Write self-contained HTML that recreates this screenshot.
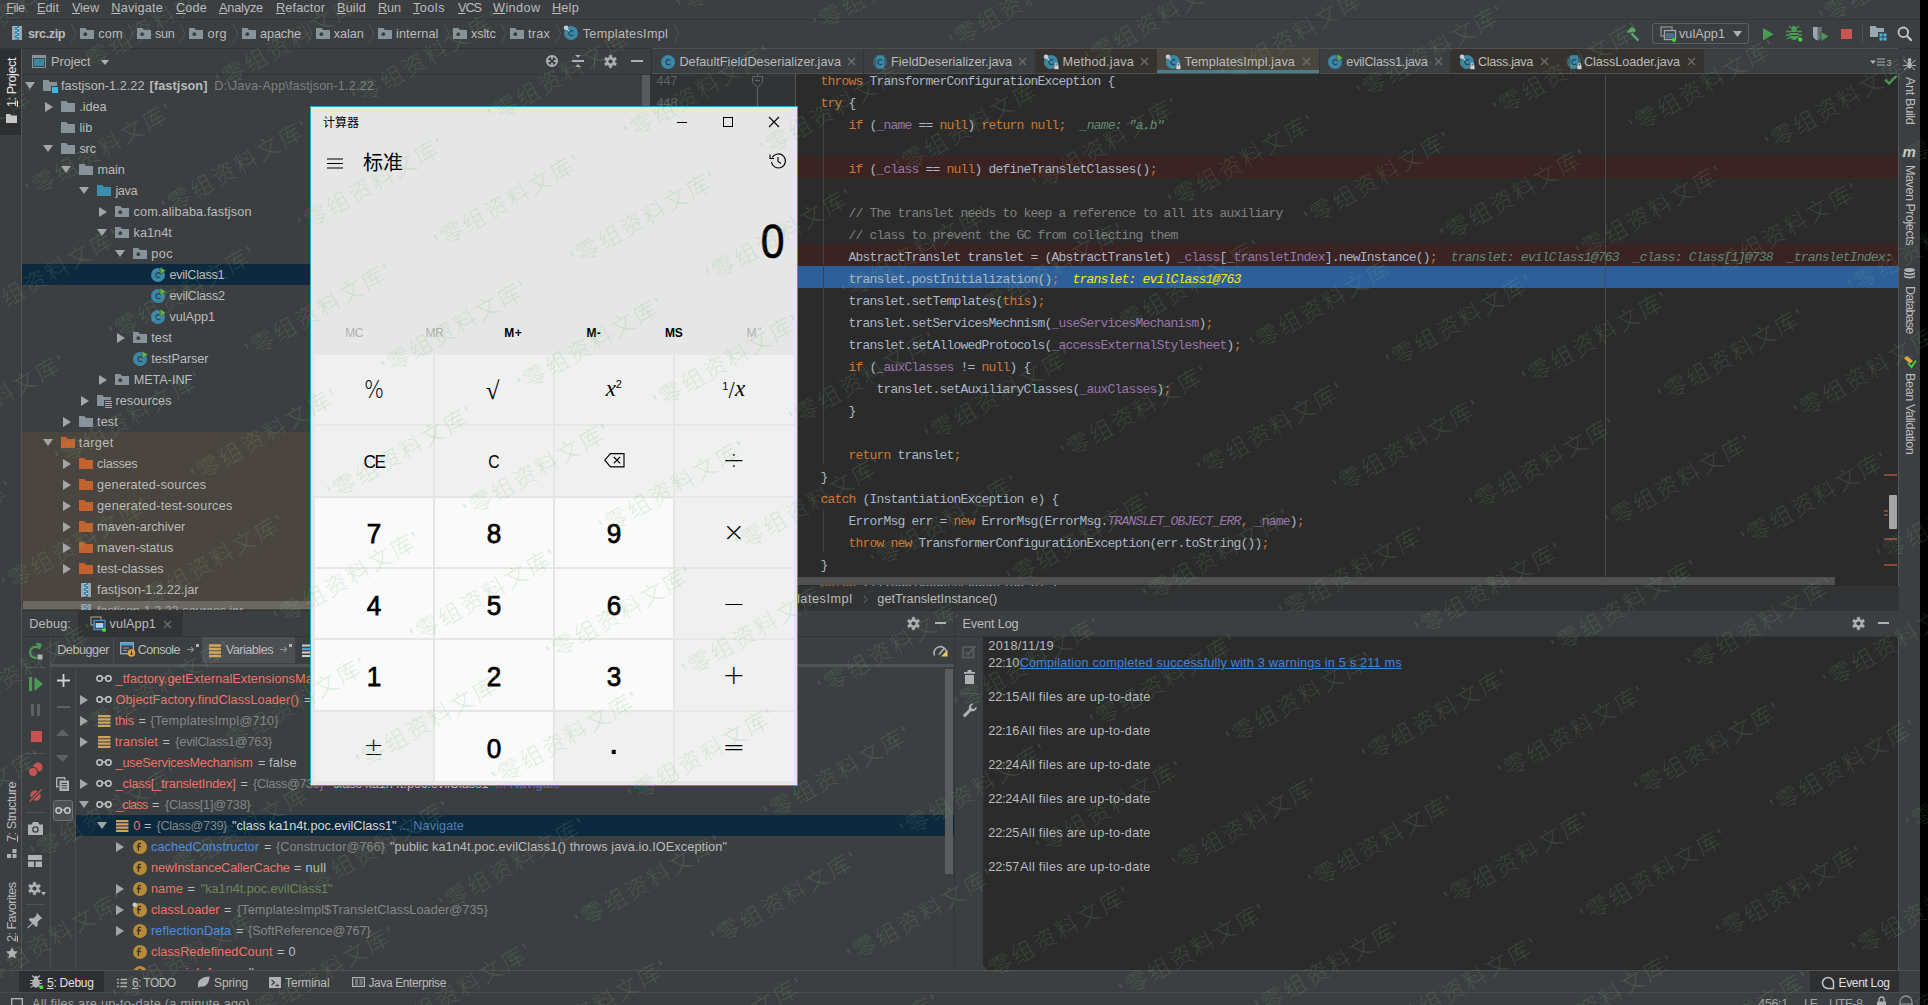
<!DOCTYPE html>
<html lang="en"><head><meta charset="utf-8"><title>TemplatesImpl.java - fastjson</title>
<style>
html,body{margin:0;padding:0;}
body{width:1928px;height:1005px;overflow:hidden;position:relative;background:#3c3f41;font-family:"Liberation Sans","Noto Sans CJK SC",sans-serif;}
#r{position:absolute;left:0;top:0;width:1928px;height:1005px;overflow:hidden;}
#r div,#r svg,#r span.t,#r pre{position:absolute;}
span.t{white-space:pre;font-family:"Liberation Sans","Noto Sans CJK SC",sans-serif;}
span.t span{position:static;}
svg{overflow:visible;display:block;}
pre.cl{margin:0;font-family:"Liberation Mono","Noto Sans CJK SC",monospace;font-size:13px;letter-spacing:-0.8px;line-height:22px;height:22px;white-space:pre;color:#a9b7c6;}
u{text-decoration:underline;text-underline-offset:1px;}
#r span.wm{position:absolute;white-space:nowrap;font-family:"Liberation Sans","Noto Sans CJK SC",sans-serif;font-weight:300;font-size:23px;letter-spacing:2.4px;line-height:30px;color:rgba(150,215,150,.17);transform:translate(-50%,-50%) rotate(-30deg);}
#r span.w2{color:rgba(90,190,90,.13);}
</style></head>
<body><div id="r">
<div style="left:0px;top:0px;width:1928px;height:20px;background:#3c3f41;"></div>
<div style="left:0px;top:19px;width:1928px;height:1px;background:#323537;"></div>
<span class="t" style="letter-spacing:-0.517px;left:6.2px;top:-2.5px;line-height:20px;font-size:12.7px;color:#bbb;"><u>F</u>ile</span>
<span class="t" style="letter-spacing:0.031px;left:37px;top:-2.5px;line-height:20px;font-size:12.7px;color:#bbb;"><u>E</u>dit</span>
<span class="t" style="letter-spacing:-0.045px;left:71.9px;top:-2.5px;line-height:20px;font-size:12.7px;color:#bbb;"><u>V</u>iew</span>
<span class="t" style="letter-spacing:0.201px;left:111.3px;top:-2.5px;line-height:20px;font-size:12.7px;color:#bbb;"><u>N</u>avigate</span>
<span class="t" style="letter-spacing:0.164px;left:176px;top:-2.5px;line-height:20px;font-size:12.7px;color:#bbb;"><u>C</u>ode</span>
<span class="t" style="letter-spacing:-0.165px;left:219px;top:-2.5px;line-height:20px;font-size:12.7px;color:#bbb;"><u>A</u>nalyze</span>
<span class="t" style="letter-spacing:0.129px;left:276px;top:-2.5px;line-height:20px;font-size:12.7px;color:#bbb;"><u>R</u>efactor</span>
<span class="t" style="letter-spacing:0.156px;left:337px;top:-2.5px;line-height:20px;font-size:12.7px;color:#bbb;"><u>B</u>uild</span>
<span class="t" style="letter-spacing:-0.099px;left:378px;top:-2.5px;line-height:20px;font-size:12.7px;color:#bbb;"><u>R</u>un</span>
<span class="t" style="letter-spacing:0.495px;left:412.9px;top:-2.5px;line-height:20px;font-size:12.7px;color:#bbb;"><u>T</u>ools</span>
<span class="t" style="letter-spacing:-1.031px;left:458px;top:-2.5px;line-height:20px;font-size:12.7px;color:#bbb;"><u>V</u>CS</span>
<span class="t" style="letter-spacing:0.393px;left:493px;top:-2.5px;line-height:20px;font-size:12.7px;color:#bbb;"><u>W</u>indow</span>
<span class="t" style="letter-spacing:0.248px;left:551.9px;top:-2.5px;line-height:20px;font-size:12.7px;color:#bbb;"><u>H</u>elp</span>
<div style="left:0px;top:20px;width:1928px;height:28px;background:#3c3f41;"></div>
<div style="left:0px;top:48px;width:1928px;height:1px;background:#323537;"></div>
<svg style="left:12px;top:26px;" width="10" height="14" viewBox="0 0 10 14"><rect x="0" y="0" width="3" height="14" fill="#9aa7b0"/><rect x="7" y="0" width="3" height="14" fill="#9aa7b0"/><rect x="3" y="0" width="4" height="14" fill="#3a86a8"/><rect x="3" y="0" width="2" height="1" fill="#9fd6ee"/><rect x="5" y="2" width="2" height="1" fill="#9fd6ee"/><rect x="3" y="4" width="2" height="1" fill="#9fd6ee"/><rect x="5" y="6" width="2" height="1" fill="#9fd6ee"/><rect x="3" y="8" width="2" height="1" fill="#9fd6ee"/><rect x="5" y="10" width="2" height="1" fill="#9fd6ee"/><rect x="3" y="12" width="2" height="1" fill="#9fd6ee"/></svg>
<span class="t" style="letter-spacing:-0.458px;left:28px;top:23.5px;line-height:20px;font-size:12.7px;color:#bbb;font-weight:bold;">src.zip</span>
<svg style="left:69.5px;top:24px;" width="7" height="19" viewBox="0 0 7 19"><path d="M1 0L6 9.5L1 19" fill="none" stroke="#515456" stroke-width="1"/></svg>
<svg style="left:80px;top:28px;" width="14" height="11" viewBox="0 0 14 11"><path d="M0 0h5.2l1.8 2h7v9h-14z" fill="#87939a"/><circle cx="5.3" cy="6.2" r="1.9" fill="#3c3f41"/></svg>
<span class="t" style="letter-spacing:0.110px;left:98.3px;top:23.5px;line-height:20px;font-size:12.7px;color:#bbb;">com</span>
<svg style="left:127.1px;top:24px;" width="7" height="19" viewBox="0 0 7 19"><path d="M1 0L6 9.5L1 19" fill="none" stroke="#515456" stroke-width="1"/></svg>
<svg style="left:137px;top:28px;" width="14" height="11" viewBox="0 0 14 11"><path d="M0 0h5.2l1.8 2h7v9h-14z" fill="#87939a"/><circle cx="5.3" cy="6.2" r="1.9" fill="#3c3f41"/></svg>
<span class="t" style="letter-spacing:-0.290px;left:155px;top:23.5px;line-height:20px;font-size:12.7px;color:#bbb;">sun</span>
<svg style="left:179.1px;top:24px;" width="7" height="19" viewBox="0 0 7 19"><path d="M1 0L6 9.5L1 19" fill="none" stroke="#515456" stroke-width="1"/></svg>
<svg style="left:189px;top:28px;" width="14" height="11" viewBox="0 0 14 11"><path d="M0 0h5.2l1.8 2h7v9h-14z" fill="#87939a"/><circle cx="5.3" cy="6.2" r="1.9" fill="#3c3f41"/></svg>
<span class="t" style="letter-spacing:0.385px;left:207.5px;top:23.5px;line-height:20px;font-size:12.7px;color:#bbb;">org</span>
<svg style="left:231.5px;top:24px;" width="7" height="19" viewBox="0 0 7 19"><path d="M1 0L6 9.5L1 19" fill="none" stroke="#515456" stroke-width="1"/></svg>
<svg style="left:242px;top:28px;" width="14" height="11" viewBox="0 0 14 11"><path d="M0 0h5.2l1.8 2h7v9h-14z" fill="#87939a"/><circle cx="5.3" cy="6.2" r="1.9" fill="#3c3f41"/></svg>
<span class="t" style="letter-spacing:-0.104px;left:260px;top:23.5px;line-height:20px;font-size:12.7px;color:#bbb;">apache</span>
<svg style="left:305.5px;top:24px;" width="7" height="19" viewBox="0 0 7 19"><path d="M1 0L6 9.5L1 19" fill="none" stroke="#515456" stroke-width="1"/></svg>
<svg style="left:315.6px;top:28px;" width="14" height="11" viewBox="0 0 14 11"><path d="M0 0h5.2l1.8 2h7v9h-14z" fill="#87939a"/><circle cx="5.3" cy="6.2" r="1.9" fill="#3c3f41"/></svg>
<span class="t" style="letter-spacing:-0.109px;left:333.8px;top:23.5px;line-height:20px;font-size:12.7px;color:#bbb;">xalan</span>
<svg style="left:368.1px;top:24px;" width="7" height="19" viewBox="0 0 7 19"><path d="M1 0L6 9.5L1 19" fill="none" stroke="#515456" stroke-width="1"/></svg>
<svg style="left:378px;top:28px;" width="14" height="11" viewBox="0 0 14 11"><path d="M0 0h5.2l1.8 2h7v9h-14z" fill="#87939a"/><circle cx="5.3" cy="6.2" r="1.9" fill="#3c3f41"/></svg>
<span class="t" style="letter-spacing:0.109px;left:396px;top:23.5px;line-height:20px;font-size:12.7px;color:#bbb;">internal</span>
<svg style="left:443.0px;top:24px;" width="7" height="19" viewBox="0 0 7 19"><path d="M1 0L6 9.5L1 19" fill="none" stroke="#515456" stroke-width="1"/></svg>
<svg style="left:453px;top:28px;" width="14" height="11" viewBox="0 0 14 11"><path d="M0 0h5.2l1.8 2h7v9h-14z" fill="#87939a"/><circle cx="5.3" cy="6.2" r="1.9" fill="#3c3f41"/></svg>
<span class="t" style="letter-spacing:-0.135px;left:471px;top:23.5px;line-height:20px;font-size:12.7px;color:#bbb;">xsltc</span>
<svg style="left:500.2px;top:24px;" width="7" height="19" viewBox="0 0 7 19"><path d="M1 0L6 9.5L1 19" fill="none" stroke="#515456" stroke-width="1"/></svg>
<svg style="left:510px;top:28px;" width="14" height="11" viewBox="0 0 14 11"><path d="M0 0h5.2l1.8 2h7v9h-14z" fill="#87939a"/><circle cx="5.3" cy="6.2" r="1.9" fill="#3c3f41"/></svg>
<span class="t" style="letter-spacing:0.211px;left:528px;top:23.5px;line-height:20px;font-size:12.7px;color:#bbb;">trax</span>
<svg style="left:554.5px;top:24px;" width="7" height="19" viewBox="0 0 7 19"><path d="M1 0L6 9.5L1 19" fill="none" stroke="#515456" stroke-width="1"/></svg>
<svg style="left:562.5px;top:24px;" width="17" height="18" viewBox="-1 -2 17 18"><circle cx="7" cy="7" r="7" fill="#3c87a5"/><path d="M9.2 8.8A2.5 2.5 0 1 1 9.2 5.3" fill="none" stroke="#1f4556" stroke-width="1.2"/><circle cx="2" cy="1.800" r="2.300" fill="#c4cdd3"/><path d="M3.300 3.200l2 2.100" stroke="#c4cdd3" stroke-width="1.200"/></svg>
<span class="t" style="letter-spacing:0.285px;left:582.7px;top:23.5px;line-height:20px;font-size:12.7px;color:#bbb;">TemplatesImpl</span>
<svg style="left:672.5px;top:24px;" width="7" height="19" viewBox="0 0 7 19"><path d="M1 0L6 9.5L1 19" fill="none" stroke="#515456" stroke-width="1"/></svg>
<div style="left:0px;top:49px;width:21px;height:921px;background:#3c3f41;"></div>
<div style="left:21px;top:49px;width:1px;height:921px;background:#555555;"></div>
<div style="left:0px;top:49px;width:21px;height:86px;background:#2d2f30;"></div>
<span class="t" style="letter-spacing:-0.461px;left:12px;top:96.5px;line-height:20px;font-size:12.7px;color:#e8e8e8;transform-origin:0 50%;transform:rotate(-90deg);"><u>1</u>: Project</span>
<svg style="left:6px;top:113.5px;" width="11" height="9" viewBox="0 0 11 9"><path d="M0 0h4l1.5 1.6h5.5v7.4h-11z" fill="#c8c8c8"/></svg>
<span class="t" style="letter-spacing:-0.466px;left:12px;top:832.0px;line-height:20px;font-size:12.7px;color:#bbb;transform-origin:0 50%;transform:rotate(-90deg);"><u>7</u>: Structure</span>
<svg style="left:6.5px;top:849px;" width="10" height="9" viewBox="0 0 10 9"><rect x="0" y="5" width="4" height="4" fill="#afb1b3"/><rect x="5.5" y="5" width="4" height="4" fill="#afb1b3"/><rect x="5.5" y="0" width="4" height="4" fill="#afb1b3"/></svg>
<span class="t" style="letter-spacing:-0.566px;left:12px;top:932.0px;line-height:20px;font-size:12.7px;color:#bbb;transform-origin:0 50%;transform:rotate(-90deg);"><u>2</u>: Favorites</span>
<svg style="left:5.5px;top:947px;" width="12" height="12" viewBox="0 0 12 12"><path d="M6 0l1.8 4.1 4.2.4-3.2 2.9 1 4.3L6 9.4 2.2 11.7l1-4.3L0 4.5l4.2-.4z" fill="#afb1b3"/></svg>
<div style="left:22px;top:49px;width:629px;height:25px;background:#3c3f41;"></div>
<div style="left:22px;top:74px;width:629px;height:1px;background:#323537;"></div>
<svg style="left:32px;top:55px;" width="14" height="13" viewBox="0 0 14 13"><rect width="14" height="13" fill="#87939a"/><rect x="1" y="3" width="12" height="9" fill="#3c3f41"/><rect x="1.800" y="3.900" width="10.400" height="7.200" fill="#3e86a0"/></svg>
<span class="t" style="letter-spacing:0.000px;left:51px;top:51.5px;line-height:20px;font-size:12.7px;color:#bbb;">Project</span>
<svg style="left:101px;top:59.5px;" width="8" height="5" viewBox="0 0 8 5"><path d="M0 0h8L4 5z" fill="#afb1b3"/></svg>
<svg style="left:546px;top:55px;" width="12" height="12" viewBox="0 0 12 12"><circle cx="6" cy="6" r="5" fill="none" stroke="#afb1b3" stroke-width="2"/><path d="M6 1v3.200M6 7.800V11M1 6h3.200M7.800 6H11" stroke="#afb1b3" stroke-width="1.800"/></svg>
<svg style="left:572px;top:55px;" width="12" height="12" viewBox="0 0 12 12"><path d="M0 6h12" stroke="#afb1b3" stroke-width="2"/><path d="M3 0h6L6 2.800zM3 12h6L6 9.200z" fill="#afb1b3"/></svg>
<div style="left:594px;top:53px;width:1px;height:17px;background:#515456;"></div>
<svg style="left:604.1px;top:54.5px;" width="13" height="13" viewBox="0 0 13 13"><g transform="translate(6.5 6.5)"><polygon points="-1.40,-4.07 -1.22,-6.28 1.22,-6.28 1.40,-4.07 2.82,-3.25 4.83,-4.20 6.05,-2.08 4.22,-0.82 4.22,0.82 6.05,2.08 4.83,4.20 2.82,3.25 1.40,4.07 1.22,6.28 -1.22,6.28 -1.40,4.07 -2.82,3.25 -4.83,4.20 -6.05,2.08 -4.22,0.82 -4.22,-0.82 -6.05,-2.08 -4.83,-4.20 -2.82,-3.25" fill="#afb1b3" stroke="#afb1b3" stroke-width=".5" stroke-linejoin="round"/><circle r="2.1" fill="#3c3f41"/></g></svg>
<div style="left:630.7px;top:60px;width:12px;height:2px;background:#afb1b3;"></div>
<div style="left:22px;top:432px;width:629px;height:180px;background:#4a463f;"></div>
<div style="left:22px;top:264px;width:629px;height:21px;background:#0d293e;"></div>
<svg style="left:25px;top:82.0px;" width="10" height="7" viewBox="0 0 10 7"><path d="M0 0h10L5 7z" fill="#a3a5a6"/></svg>
<svg style="left:43px;top:80px;" width="14" height="11" viewBox="0 0 14 11"><path d="M0 0h5.2l1.8 2h7v9h-14z" fill="#87939a"/></svg>
<svg style="left:51px;top:86px;" width="7" height="7" viewBox="0 0 7 7"><rect width="7" height="7" fill="#3c3f41"/><rect x="1" y="1" width="6" height="6" fill="#40b6e0"/></svg>
<span class="t" style="letter-spacing:0.024px;left:60.9px;top:76.0px;line-height:20px;font-size:12.7px;color:#bbb;">fastjson-1.2.22</span>
<svg style="left:45px;top:101.5px;" width="8" height="10" viewBox="0 0 8 10"><path d="M0 0L8 5L0 10z" fill="#a3a5a6"/></svg>
<svg style="left:61px;top:101px;" width="14" height="11" viewBox="0 0 14 11"><path d="M0 0h5.2l1.8 2h7v9h-14z" fill="#87939a"/></svg>
<span class="t" style="letter-spacing:-0.083px;left:79.4px;top:97.0px;line-height:20px;font-size:12.7px;color:#bbb;">.idea</span>
<svg style="left:61px;top:122px;" width="14" height="11" viewBox="0 0 14 11"><path d="M0 0h5.2l1.8 2h7v9h-14z" fill="#87939a"/></svg>
<span class="t" style="letter-spacing:0.099px;left:79.4px;top:118.0px;line-height:20px;font-size:12.7px;color:#bbb;">lib</span>
<svg style="left:43px;top:145.0px;" width="10" height="7" viewBox="0 0 10 7"><path d="M0 0h10L5 7z" fill="#a3a5a6"/></svg>
<svg style="left:61px;top:143px;" width="14" height="11" viewBox="0 0 14 11"><path d="M0 0h5.2l1.8 2h7v9h-14z" fill="#87939a"/></svg>
<span class="t" style="letter-spacing:-0.141px;left:79.4px;top:139.0px;line-height:20px;font-size:12.7px;color:#bbb;">src</span>
<svg style="left:61px;top:166.0px;" width="10" height="7" viewBox="0 0 10 7"><path d="M0 0h10L5 7z" fill="#a3a5a6"/></svg>
<svg style="left:79px;top:164px;" width="14" height="11" viewBox="0 0 14 11"><path d="M0 0h5.2l1.8 2h7v9h-14z" fill="#87939a"/></svg>
<span class="t" style="letter-spacing:-0.125px;left:97.6px;top:160.0px;line-height:20px;font-size:12.7px;color:#bbb;">main</span>
<svg style="left:79px;top:187.0px;" width="10" height="7" viewBox="0 0 10 7"><path d="M0 0h10L5 7z" fill="#a3a5a6"/></svg>
<svg style="left:97px;top:185px;" width="14" height="11" viewBox="0 0 14 11"><path d="M0 0h5.2l1.8 2h7v9h-14z" fill="#3a8fb0"/></svg>
<span class="t" style="letter-spacing:-0.345px;left:115.4px;top:181.0px;line-height:20px;font-size:12.7px;color:#bbb;">java</span>
<svg style="left:99px;top:206.5px;" width="8" height="10" viewBox="0 0 8 10"><path d="M0 0L8 5L0 10z" fill="#a3a5a6"/></svg>
<svg style="left:115px;top:206px;" width="14" height="11" viewBox="0 0 14 11"><path d="M0 0h5.2l1.8 2h7v9h-14z" fill="#87939a"/><circle cx="5.3" cy="6.2" r="1.9" fill="#3c3f41"/></svg>
<span class="t" style="letter-spacing:0.121px;left:133.5px;top:202.0px;line-height:20px;font-size:12.7px;color:#bbb;">com.alibaba.fastjson</span>
<svg style="left:97px;top:229.0px;" width="10" height="7" viewBox="0 0 10 7"><path d="M0 0h10L5 7z" fill="#a3a5a6"/></svg>
<svg style="left:115px;top:227px;" width="14" height="11" viewBox="0 0 14 11"><path d="M0 0h5.2l1.8 2h7v9h-14z" fill="#87939a"/><circle cx="5.3" cy="6.2" r="1.9" fill="#3c3f41"/></svg>
<span class="t" style="letter-spacing:0.051px;left:133.5px;top:223.0px;line-height:20px;font-size:12.7px;color:#bbb;">ka1n4t</span>
<svg style="left:115px;top:250.0px;" width="10" height="7" viewBox="0 0 10 7"><path d="M0 0h10L5 7z" fill="#a3a5a6"/></svg>
<svg style="left:133px;top:248px;" width="14" height="11" viewBox="0 0 14 11"><path d="M0 0h5.2l1.8 2h7v9h-14z" fill="#87939a"/><circle cx="5.3" cy="6.2" r="1.9" fill="#3c3f41"/></svg>
<span class="t" style="letter-spacing:0.377px;left:151.3px;top:244.0px;line-height:20px;font-size:12.7px;color:#bbb;">poc</span>
<svg style="left:150px;top:266px;" width="17" height="18" viewBox="-1 -2 17 18"><circle cx="7" cy="7" r="7" fill="#3c87a5"/><path d="M9.2 8.8A2.5 2.5 0 1 1 9.2 5.3" fill="none" stroke="#1f4556" stroke-width="1.2"/><path d="M9.2 -1L15 2.7L9.2 6.4z" fill="#62b543" stroke="#0d293e" stroke-width=".5"/></svg>
<span class="t" style="letter-spacing:-0.313px;left:169.5px;top:265.0px;line-height:20px;font-size:12.7px;color:#bbb;">evilClass1</span>
<svg style="left:150px;top:287px;" width="17" height="18" viewBox="-1 -2 17 18"><circle cx="7" cy="7" r="7" fill="#3c87a5"/><path d="M9.2 8.8A2.5 2.5 0 1 1 9.2 5.3" fill="none" stroke="#1f4556" stroke-width="1.2"/><path d="M9.2 -1L15 2.7L9.2 6.4z" fill="#62b543" stroke="#3c3f41" stroke-width=".5"/></svg>
<span class="t" style="letter-spacing:-0.243px;left:169.5px;top:286.0px;line-height:20px;font-size:12.7px;color:#bbb;">evilClass2</span>
<svg style="left:150px;top:308px;" width="17" height="18" viewBox="-1 -2 17 18"><circle cx="7" cy="7" r="7" fill="#3c87a5"/><path d="M9.2 8.8A2.5 2.5 0 1 1 9.2 5.3" fill="none" stroke="#1f4556" stroke-width="1.2"/><path d="M9.2 -1L15 2.7L9.2 6.4z" fill="#62b543" stroke="#3c3f41" stroke-width=".5"/></svg>
<span class="t" style="letter-spacing:-0.051px;left:169.5px;top:307.0px;line-height:20px;font-size:12.7px;color:#bbb;">vulApp1</span>
<svg style="left:117px;top:332.5px;" width="8" height="10" viewBox="0 0 8 10"><path d="M0 0L8 5L0 10z" fill="#a3a5a6"/></svg>
<svg style="left:133px;top:332px;" width="14" height="11" viewBox="0 0 14 11"><path d="M0 0h5.2l1.8 2h7v9h-14z" fill="#87939a"/><circle cx="5.3" cy="6.2" r="1.9" fill="#3c3f41"/></svg>
<span class="t" style="letter-spacing:0.037px;left:151.3px;top:328.0px;line-height:20px;font-size:12.7px;color:#bbb;">test</span>
<svg style="left:132px;top:350px;" width="17" height="18" viewBox="-1 -2 17 18"><circle cx="7" cy="7" r="7" fill="#3c87a5"/><path d="M9.2 8.8A2.5 2.5 0 1 1 9.2 5.3" fill="none" stroke="#1f4556" stroke-width="1.2"/><path d="M9.2 -1L15 2.7L9.2 6.4z" fill="#62b543" stroke="#3c3f41" stroke-width=".5"/></svg>
<span class="t" style="letter-spacing:-0.063px;left:151.3px;top:349.0px;line-height:20px;font-size:12.7px;color:#bbb;">testParser</span>
<svg style="left:99px;top:374.5px;" width="8" height="10" viewBox="0 0 8 10"><path d="M0 0L8 5L0 10z" fill="#a3a5a6"/></svg>
<svg style="left:115px;top:374px;" width="14" height="11" viewBox="0 0 14 11"><path d="M0 0h5.2l1.8 2h7v9h-14z" fill="#87939a"/><circle cx="5.3" cy="6.2" r="1.9" fill="#3c3f41"/></svg>
<span class="t" style="letter-spacing:-0.059px;left:133.7px;top:370.0px;line-height:20px;font-size:12.7px;color:#bbb;">META-INF</span>
<svg style="left:81px;top:395.5px;" width="8" height="10" viewBox="0 0 8 10"><path d="M0 0L8 5L0 10z" fill="#a3a5a6"/></svg>
<svg style="left:97px;top:395px;" width="14" height="11" viewBox="0 0 14 11"><path d="M0 0h5.2l1.8 2h7v9h-14z" fill="#87939a"/></svg>
<svg style="left:104px;top:400px;" width="8" height="8" viewBox="0 0 8 8"><rect width="8" height="8" fill="#3c3f41"/><path d="M1 1.5h7M1 3.5h7M1 5.5h7M1 7.5h7" stroke="#d9a343" stroke-width="1"/></svg>
<span class="t" style="letter-spacing:0.053px;left:115.4px;top:391.0px;line-height:20px;font-size:12.7px;color:#bbb;">resources</span>
<svg style="left:63px;top:416.5px;" width="8" height="10" viewBox="0 0 8 10"><path d="M0 0L8 5L0 10z" fill="#a3a5a6"/></svg>
<svg style="left:79px;top:416px;" width="14" height="11" viewBox="0 0 14 11"><path d="M0 0h5.2l1.8 2h7v9h-14z" fill="#87939a"/></svg>
<span class="t" style="letter-spacing:0.062px;left:97.1px;top:412.0px;line-height:20px;font-size:12.7px;color:#bbb;">test</span>
<svg style="left:43px;top:439.0px;" width="10" height="7" viewBox="0 0 10 7"><path d="M0 0h10L5 7z" fill="#a3a5a6"/></svg>
<svg style="left:61px;top:437px;" width="14" height="11" viewBox="0 0 14 11"><path d="M0 0h5.2l1.8 2h7v9h-14z" fill="#c2632f"/></svg>
<span class="t" style="letter-spacing:0.408px;left:78.8px;top:433.0px;line-height:20px;font-size:12.7px;color:#bbb;">target</span>
<svg style="left:63px;top:458.5px;" width="8" height="10" viewBox="0 0 8 10"><path d="M0 0L8 5L0 10z" fill="#a3a5a6"/></svg>
<svg style="left:79px;top:458px;" width="14" height="11" viewBox="0 0 14 11"><path d="M0 0h5.2l1.8 2h7v9h-14z" fill="#c2632f"/></svg>
<span class="t" style="letter-spacing:-0.287px;left:97.1px;top:454.0px;line-height:20px;font-size:12.7px;color:#bbb;">classes</span>
<svg style="left:63px;top:479.5px;" width="8" height="10" viewBox="0 0 8 10"><path d="M0 0L8 5L0 10z" fill="#a3a5a6"/></svg>
<svg style="left:79px;top:479px;" width="14" height="11" viewBox="0 0 14 11"><path d="M0 0h5.2l1.8 2h7v9h-14z" fill="#c2632f"/></svg>
<span class="t" style="letter-spacing:0.206px;left:97.1px;top:475.0px;line-height:20px;font-size:12.7px;color:#bbb;">generated-sources</span>
<svg style="left:63px;top:500.5px;" width="8" height="10" viewBox="0 0 8 10"><path d="M0 0L8 5L0 10z" fill="#a3a5a6"/></svg>
<svg style="left:79px;top:500px;" width="14" height="11" viewBox="0 0 14 11"><path d="M0 0h5.2l1.8 2h7v9h-14z" fill="#c2632f"/></svg>
<span class="t" style="letter-spacing:0.224px;left:97.1px;top:496.0px;line-height:20px;font-size:12.7px;color:#bbb;">generated-test-sources</span>
<svg style="left:63px;top:521.5px;" width="8" height="10" viewBox="0 0 8 10"><path d="M0 0L8 5L0 10z" fill="#a3a5a6"/></svg>
<svg style="left:79px;top:521px;" width="14" height="11" viewBox="0 0 14 11"><path d="M0 0h5.2l1.8 2h7v9h-14z" fill="#c2632f"/></svg>
<span class="t" style="letter-spacing:0.062px;left:97.1px;top:517.0px;line-height:20px;font-size:12.7px;color:#bbb;">maven-archiver</span>
<svg style="left:63px;top:542.5px;" width="8" height="10" viewBox="0 0 8 10"><path d="M0 0L8 5L0 10z" fill="#a3a5a6"/></svg>
<svg style="left:79px;top:542px;" width="14" height="11" viewBox="0 0 14 11"><path d="M0 0h5.2l1.8 2h7v9h-14z" fill="#c2632f"/></svg>
<span class="t" style="letter-spacing:0.004px;left:97.1px;top:538.0px;line-height:20px;font-size:12.7px;color:#bbb;">maven-status</span>
<svg style="left:63px;top:563.5px;" width="8" height="10" viewBox="0 0 8 10"><path d="M0 0L8 5L0 10z" fill="#a3a5a6"/></svg>
<svg style="left:79px;top:563px;" width="14" height="11" viewBox="0 0 14 11"><path d="M0 0h5.2l1.8 2h7v9h-14z" fill="#c2632f"/></svg>
<span class="t" style="letter-spacing:-0.049px;left:97.1px;top:559.0px;line-height:20px;font-size:12.7px;color:#bbb;">test-classes</span>
<svg style="left:81px;top:583px;" width="10" height="14" viewBox="0 0 10 14"><rect x="0" y="0" width="3" height="14" fill="#9aa7b0"/><rect x="7" y="0" width="3" height="14" fill="#9aa7b0"/><rect x="3" y="0" width="4" height="14" fill="#3a86a8"/><rect x="3" y="0" width="2" height="1" fill="#9fd6ee"/><rect x="5" y="2" width="2" height="1" fill="#9fd6ee"/><rect x="3" y="4" width="2" height="1" fill="#9fd6ee"/><rect x="5" y="6" width="2" height="1" fill="#9fd6ee"/><rect x="3" y="8" width="2" height="1" fill="#9fd6ee"/><rect x="5" y="10" width="2" height="1" fill="#9fd6ee"/><rect x="3" y="12" width="2" height="1" fill="#9fd6ee"/></svg>
<span class="t" style="letter-spacing:0.034px;left:97.1px;top:580.0px;line-height:20px;font-size:12.7px;color:#bbb;">fastjson-1.2.22.jar</span>
<svg style="left:81px;top:604px;" width="10" height="14" viewBox="0 0 10 14"><rect x="0" y="0" width="3" height="14" fill="#9aa7b0"/><rect x="7" y="0" width="3" height="14" fill="#9aa7b0"/><rect x="3" y="0" width="4" height="14" fill="#3a86a8"/><rect x="3" y="0" width="2" height="1" fill="#9fd6ee"/><rect x="5" y="2" width="2" height="1" fill="#9fd6ee"/><rect x="3" y="4" width="2" height="1" fill="#9fd6ee"/><rect x="5" y="6" width="2" height="1" fill="#9fd6ee"/><rect x="3" y="8" width="2" height="1" fill="#9fd6ee"/><rect x="5" y="10" width="2" height="1" fill="#9fd6ee"/><rect x="3" y="12" width="2" height="1" fill="#9fd6ee"/></svg>
<span class="t" style="letter-spacing:-0.133px;left:97.1px;top:601.0px;line-height:20px;font-size:12.7px;color:#bbb;">fastjson-1.2.22-sources.jar</span>
<span class="t" style="letter-spacing:0.081px;left:149.6px;top:76.0px;line-height:20px;font-size:12.7px;color:#bbb;font-weight:bold;">[fastjson]</span>
<span class="t" style="letter-spacing:0.109px;left:214.3px;top:76.0px;line-height:20px;font-size:12.7px;color:#7d7f80;">D:\Java-App\fastjson-1.2.22</span>
<div style="left:23px;top:601px;width:560px;height:8px;background:rgba(140,140,135,.5);"></div>
<div style="left:642px;top:75px;width:8px;height:40px;background:#595b5d;"></div>
<svg style="left:1624px;top:25px;" width="17" height="17" viewBox="0 0 17 17"><path d="M2 7.5L7.5 2l3 1.2 1.3 2.6-2 2-1.5-1.2-1.2 1.2z" fill="#59a869"/><path d="M8.2 7.6l7 7.2-1.6 1.6-7-7.2z" fill="#59a869"/></svg>
<div style="left:1652px;top:23px;width:97px;height:21px;border:1px solid #5e6162;border-radius:3px;box-sizing:border-box"></div>
<svg style="left:1660px;top:26px;" width="17" height="16" viewBox="0 0 17 16"><rect x="1" y="1" width="11" height="9" fill="none" stroke="#8b8e90" stroke-width="1.4"/><rect x="4.5" y="4.5" width="11" height="9" fill="#3c3f41" stroke="#9aa7b0" stroke-width="1.4"/><rect x="6" y="7" width="8" height="5" fill="#4e6e87"/><circle cx="14" cy="14" r="2" fill="#3ddb3d"/></svg>
<span class="t" style="letter-spacing:0.020px;left:1679px;top:23.5px;line-height:20px;font-size:12.7px;color:#bbb;">vulApp1</span>
<svg style="left:1733px;top:31px;" width="9" height="6" viewBox="0 0 9 6"><path d="M0 0h9L4.5 6z" fill="#afb1b3"/></svg>
<svg style="left:1763px;top:27.5px;" width="10.5" height="12.5" viewBox="0 0 10.5 12.5"><path d="M0 0l10.500 6.250L0 12.500z" fill="#499c54"/></svg>
<svg style="left:1786px;top:25px;" width="17" height="17" viewBox="0 0 17 17"><ellipse cx="8" cy="9.5" rx="4.6" ry="5.4" fill="#499c54"/><circle cx="8" cy="3.6" r="2.6" fill="#499c54"/><path d="M0 6.5h4M12 6.5h4M0 10h3.5M12.5 10H16M.5 14l3.5-1.6M15.5 14L12 12.4M3 1l2.4 2M13 1l-2.4 2" stroke="#499c54" stroke-width="1.3"/><path d="M4 7.5h8M4 10.5h8" stroke="#3c3f41" stroke-width="1"/><circle cx="14.3" cy="14.6" r="2.1" fill="#3ddb3d"/></svg>
<svg style="left:1812px;top:26px;" width="17" height="16" viewBox="0 0 17 16"><path d="M1 1h9v8.5c0 2.5-2.5 4.2-4.5 5C3.5 13.700 1 12 1 9.500z" fill="#9aa7b0"/><path d="M5.500 1h4.500v8.5c0 2.500-2.500 4.200-4.500 5z" fill="#3c3f41" opacity=".55"/><path d="M9 5.500l8 5-8 5z" fill="#499c54" stroke="#3c3f41" stroke-width=".8"/></svg>
<div style="left:1841px;top:28.5px;width:10.5px;height:10.5px;background:#c75450;"></div>
<div style="left:1862px;top:25px;width:1px;height:18px;background:#515456;"></div>
<svg style="left:1870px;top:26px;" width="17" height="15" viewBox="0 0 17 15"><path d="M0 0h5.500l1.700 2h6.800v9h-14z" fill="#9aa7b0"/><rect x="8" y="6" width="9" height="9" fill="#3c3f41"/><rect x="9.500" y="7.500" width="3" height="3" fill="#40b6e0"/><rect x="13.500" y="7.500" width="3" height="3" fill="#40b6e0"/><rect x="9.500" y="11.500" width="3" height="3" fill="#40b6e0"/><rect x="13.500" y="11.500" width="3" height="3" fill="#40b6e0"/></svg>
<svg style="left:1897px;top:26px;" width="16" height="16" viewBox="0 0 16 16"><circle cx="6.300" cy="6.300" r="4.800" fill="none" stroke="#c4c6c8" stroke-width="1.800"/><path d="M9.800 9.800l5 5" stroke="#c4c6c8" stroke-width="2.200"/></svg>
<div style="left:1899px;top:49px;width:21px;height:921px;background:#3c3f41;"></div>
<div style="left:1898px;top:49px;width:1px;height:921px;background:#555555;"></div>
<div style="left:1920px;top:0px;width:8px;height:1005px;background:#000;"></div>
<span class="t" style="letter-spacing:-0.365px;left:1909.5px;top:67.0px;line-height:20px;font-size:12.7px;color:#bbb;transform-origin:0 50%;transform:rotate(90deg);">Ant Build</span>
<svg style="left:1903px;top:57px;" width="13" height="13" viewBox="0 0 13 13"><ellipse cx="6.500" cy="8" rx="2.400" ry="3.600" fill="#afb1b3"/><circle cx="6.500" cy="3" r="1.900" fill="#afb1b3"/><path d="M0.500 3l3.500 3M12.500 3L9 6M0 8.500h4M9 8.500h4M1 13l3-2.500M12 13l-3-2.500" stroke="#afb1b3" stroke-width="1"/></svg>
<span class="t" style="letter-spacing:-0.531px;left:1909.5px;top:155.0px;line-height:20px;font-size:12.7px;color:#bbb;transform-origin:0 50%;transform:rotate(90deg);">Maven Projects</span>
<span class="t" style="left:1902.5px;top:142.0px;line-height:20px;font-size:15px;color:#c8c8c8;font-weight:bold;font-style:italic;">m</span>
<span class="t" style="letter-spacing:-0.852px;left:1909.5px;top:276.0px;line-height:20px;font-size:12.7px;color:#bbb;transform-origin:0 50%;transform:rotate(90deg);">Database</span>
<svg style="left:1904px;top:268px;" width="11" height="12" viewBox="0 0 11 12"><ellipse cx="5.500" cy="2" rx="5.500" ry="2" fill="#afb1b3"/><path d="M0 3.600c0 2.600 11 2.600 11 0v1.800c0 2.600-11 2.600-11 0zM0 6.800c0 2.600 11 2.600 11 0v1.800c0 2.600-11 2.600-11 0z" fill="#afb1b3"/></svg>
<span class="t" style="letter-spacing:-0.430px;left:1909.5px;top:363.0px;line-height:20px;font-size:12.7px;color:#bbb;transform-origin:0 50%;transform:rotate(90deg);">Bean Validation</span>
<svg style="left:1903px;top:355px;" width="14" height="14" viewBox="0 0 14 14"><path d="M1 3.500l3-2.500 6 5-3 2.500z" fill="#e8a33d"/><path d="M5 8l3.500 4L13 5.500" fill="none" stroke="#3ddb3d" stroke-width="1.800"/></svg>
<div style="left:651px;top:49px;width:1248px;height:25px;background:#3c3f41;"></div>
<div style="left:652px;top:73px;width:1246px;height:1px;background:#515151;"></div>
<div style="left:652px;top:48px;width:1246px;height:1px;background:#515151;"></div>
<div style="left:651px;top:49px;width:1px;height:25px;background:#2f3133;"></div>
<div style="left:1035px;top:49px;width:121px;height:24px;background:#36332e;"></div>
<div style="left:1450.5px;top:49px;width:106.0px;height:24px;background:#36332e;"></div>
<div style="left:1557px;top:49px;width:146px;height:24px;background:#36332e;"></div>
<div style="left:1156.5px;top:49px;width:162px;height:24px;background:#4a463e;"></div>
<div style="left:1156.5px;top:70px;width:162px;height:3px;background:#477f8e;"></div>
<div style="left:652px;top:73px;width:1246px;height:1px;background:#515151;"></div>
<svg style="left:660px;top:52.5px;" width="17" height="18" viewBox="-1 -2 17 18"><circle cx="7" cy="7" r="7" fill="#3c87a5"/><path d="M9.2 8.8A2.5 2.5 0 1 1 9.2 5.3" fill="none" stroke="#1f4556" stroke-width="1.2"/></svg>
<span class="t" style="letter-spacing:0.028px;left:679.4px;top:51.5px;line-height:20px;font-size:12.7px;color:#bbb;">DefaultFieldDeserializer.java</span>
<svg style="left:847.9px;top:58px;" width="7" height="7" viewBox="0 0 7 7"><path d="M0 0l7 7M7 0L0 7" stroke="#6e7072" stroke-width="1.200"/></svg>
<div style="left:863px;top:49px;width:1px;height:25px;background:#323537;"></div>
<svg style="left:872px;top:52.5px;" width="17" height="18" viewBox="-1 -2 17 18"><path d="M7 0a7 7 0 0 0 0 14z" fill="#3c87a5" opacity=".55"/><path d="M7 0a7 7 0 0 1 0 14z" fill="#3c87a5" opacity=".55"/><rect x="3.5" y="0.5" width="7.5" height="13" fill="#3c87a5"/><path d="M9.2 8.8A2.5 2.5 0 1 1 9.2 5.3" fill="none" stroke="#1f4556" stroke-width="1.2"/></svg>
<span class="t" style="letter-spacing:0.018px;left:891px;top:51.5px;line-height:20px;font-size:12.7px;color:#bbb;">FieldDeserializer.java</span>
<svg style="left:1018.5px;top:58px;" width="7" height="7" viewBox="0 0 7 7"><path d="M0 0l7 7M7 0L0 7" stroke="#6e7072" stroke-width="1.200"/></svg>
<div style="left:1034.5px;top:49px;width:1px;height:25px;background:#323537;"></div>
<svg style="left:1043px;top:52.5px;" width="17" height="18" viewBox="-1 -2 17 18"><circle cx="7" cy="7" r="7" fill="#3c87a5"/><path d="M9.2 8.8A2.5 2.5 0 1 1 9.2 5.3" fill="none" stroke="#1f4556" stroke-width="1.2"/><circle cx="2" cy="1.800" r="2.300" fill="#c4cdd3"/><path d="M3.300 3.200l2 2.100" stroke="#c4cdd3" stroke-width="1.200"/><rect x="9.800" y="9.800" width="5" height="4.600" fill="#36332e"/><rect x="10.300" y="10.300" width="4.200" height="3.900" fill="#d0d6da"/><path d="M11.300 10.300v-1.200a1.100 1.100 0 0 1 2.200 0v1.200" fill="none" stroke="#d0d6da" stroke-width=".9"/></svg>
<span class="t" style="letter-spacing:0.216px;left:1062.5px;top:51.5px;line-height:20px;font-size:12.7px;color:#bbb;">Method.java</span>
<svg style="left:1141.2px;top:58px;" width="7" height="7" viewBox="0 0 7 7"><path d="M0 0l7 7M7 0L0 7" stroke="#6e7072" stroke-width="1.200"/></svg>
<div style="left:1156px;top:49px;width:1px;height:25px;background:#323537;"></div>
<svg style="left:1165px;top:52.5px;" width="17" height="18" viewBox="-1 -2 17 18"><circle cx="7" cy="7" r="7" fill="#3c87a5"/><path d="M9.2 8.8A2.5 2.5 0 1 1 9.2 5.3" fill="none" stroke="#1f4556" stroke-width="1.2"/><circle cx="2" cy="1.800" r="2.300" fill="#c4cdd3"/><path d="M3.300 3.200l2 2.100" stroke="#c4cdd3" stroke-width="1.200"/><rect x="9.800" y="9.800" width="5" height="4.600" fill="#4a463e"/><rect x="10.300" y="10.300" width="4.200" height="3.900" fill="#d0d6da"/><path d="M11.300 10.300v-1.200a1.100 1.100 0 0 1 2.200 0v1.200" fill="none" stroke="#d0d6da" stroke-width=".9"/></svg>
<span class="t" style="letter-spacing:0.106px;left:1184.5px;top:51.5px;line-height:20px;font-size:12.7px;color:#bbb;">TemplatesImpl.java</span>
<svg style="left:1302.9px;top:58px;" width="7" height="7" viewBox="0 0 7 7"><path d="M0 0l7 7M7 0L0 7" stroke="#6e7072" stroke-width="1.200"/></svg>
<div style="left:1318.5px;top:49px;width:1px;height:25px;background:#323537;"></div>
<svg style="left:1327.4px;top:52.5px;" width="17" height="18" viewBox="-1 -2 17 18"><circle cx="7" cy="7" r="7" fill="#3c87a5"/><path d="M9.2 8.8A2.5 2.5 0 1 1 9.2 5.3" fill="none" stroke="#1f4556" stroke-width="1.2"/><path d="M9.2 -1L15 2.7L9.2 6.4z" fill="#62b543" stroke="#3c3f41" stroke-width=".5"/></svg>
<span class="t" style="letter-spacing:-0.228px;left:1346.3px;top:51.5px;line-height:20px;font-size:12.7px;color:#bbb;">evilClass1.java</span>
<svg style="left:1434.9px;top:58px;" width="7" height="7" viewBox="0 0 7 7"><path d="M0 0l7 7M7 0L0 7" stroke="#6e7072" stroke-width="1.200"/></svg>
<div style="left:1450px;top:49px;width:1px;height:25px;background:#323537;"></div>
<svg style="left:1459px;top:52.5px;" width="17" height="18" viewBox="-1 -2 17 18"><circle cx="7" cy="7" r="7" fill="#3c87a5"/><path d="M9.2 8.8A2.5 2.5 0 1 1 9.2 5.3" fill="none" stroke="#1f4556" stroke-width="1.2"/><circle cx="2" cy="1.800" r="2.300" fill="#c4cdd3"/><path d="M3.300 3.200l2 2.100" stroke="#c4cdd3" stroke-width="1.200"/><rect x="9.800" y="9.800" width="5" height="4.600" fill="#36332e"/><rect x="10.300" y="10.300" width="4.200" height="3.900" fill="#d0d6da"/><path d="M11.300 10.300v-1.200a1.100 1.100 0 0 1 2.200 0v1.200" fill="none" stroke="#d0d6da" stroke-width=".9"/></svg>
<span class="t" style="letter-spacing:-0.353px;left:1478px;top:51.5px;line-height:20px;font-size:12.7px;color:#bbb;">Class.java</span>
<svg style="left:1540.5px;top:58px;" width="7" height="7" viewBox="0 0 7 7"><path d="M0 0l7 7M7 0L0 7" stroke="#6e7072" stroke-width="1.200"/></svg>
<div style="left:1556.5px;top:49px;width:1px;height:25px;background:#323537;"></div>
<svg style="left:1566px;top:52.5px;" width="17" height="18" viewBox="-1 -2 17 18"><path d="M7 0a7 7 0 0 0 0 14z" fill="#3c87a5" opacity=".55"/><path d="M7 0a7 7 0 0 1 0 14z" fill="#3c87a5" opacity=".55"/><rect x="3.5" y="0.5" width="7.5" height="13" fill="#3c87a5"/><path d="M9.2 8.8A2.5 2.5 0 1 1 9.2 5.3" fill="none" stroke="#1f4556" stroke-width="1.2"/><rect x="9.800" y="9.800" width="5" height="4.600" fill="#36332e"/><rect x="10.300" y="10.300" width="4.200" height="3.900" fill="#d0d6da"/><path d="M11.300 10.300v-1.200a1.100 1.100 0 0 1 2.200 0v1.200" fill="none" stroke="#d0d6da" stroke-width=".9"/></svg>
<span class="t" style="letter-spacing:-0.084px;left:1584px;top:51.5px;line-height:20px;font-size:12.7px;color:#bbb;">ClassLoader.java</span>
<svg style="left:1687.5px;top:58px;" width="7" height="7" viewBox="0 0 7 7"><path d="M0 0l7 7M7 0L0 7" stroke="#6e7072" stroke-width="1.200"/></svg>
<div style="left:1703px;top:49px;width:1px;height:25px;background:#323537;"></div>
<svg style="left:1870px;top:58px;" width="22" height="9" viewBox="0 0 22 9"><path d="M0 2.500h6L3 6z" fill="#afb1b3"/><path d="M7 1h8M7 4h8M7 7h8" stroke="#afb1b3" stroke-width="1.200"/></svg>
<span class="t" style="left:1886.5px;top:52.5px;line-height:20px;font-size:9px;color:#afb1b3;">3</span>
<div style="left:650px;top:74px;width:145px;height:512px;background:#313335;"></div>
<div style="left:795px;top:74px;width:1px;height:512px;background:#555555;"></div>
<div style="left:796px;top:74px;width:1102px;height:512px;background:#2b2b2b;"></div>
<div style="left:796px;top:156px;width:1102px;height:22px;background:#3a2323;"></div>
<div style="left:796px;top:244px;width:1102px;height:22px;background:#3a2323;"></div>
<div style="left:796px;top:266px;width:1102px;height:22px;background:#2d5f9a;"></div>
<div style="left:823px;top:112px;width:1px;height:352px;background:#3f3f3f;"></div>
<div style="left:823px;top:508px;width:1px;height:44px;background:#3f3f3f;"></div>
<div style="left:1605px;top:75px;width:1px;height:511px;background:#4d4d4d;"></div>
<div style="left:796px;top:75px;width:1101px;height:511px;overflow:hidden">
<pre class="cl" style="left:-31.5px;top:-4px"><span style="color:#a9b7c6;">        </span><span style="color:#cc7832;">throws </span><span style="color:#a9b7c6;">TransformerConfigurationException {</span></pre>
<pre class="cl" style="left:-31.5px;top:18px"><span style="color:#a9b7c6;">        </span><span style="color:#cc7832;">try </span><span style="color:#a9b7c6;">{</span></pre>
<pre class="cl" style="left:-31.5px;top:40px"><span style="color:#a9b7c6;">            </span><span style="color:#cc7832;">if </span><span style="color:#a9b7c6;">(</span><span style="color:#9876aa;">_name</span><span style="color:#a9b7c6;"> == </span><span style="color:#cc7832;">null</span><span style="color:#a9b7c6;">) </span><span style="color:#cc7832;">return null;</span><span style="color:#a9b7c6;">  </span><span style="color:#5f8a73;font-style:italic;">_name: "a.b"</span></pre>
<pre class="cl" style="left:-31.5px;top:84px"><span style="color:#a9b7c6;">            </span><span style="color:#cc7832;">if </span><span style="color:#a9b7c6;">(</span><span style="color:#9876aa;">_class</span><span style="color:#a9b7c6;"> == </span><span style="color:#cc7832;">null</span><span style="color:#a9b7c6;">) defineTransletClasses()</span><span style="color:#cc7832;">;</span></pre>
<pre class="cl" style="left:-31.5px;top:128px"><span style="color:#808080;">            // The translet needs to keep a reference to all its auxiliary</span></pre>
<pre class="cl" style="left:-31.5px;top:150px"><span style="color:#808080;">            // class to prevent the GC from collecting them</span></pre>
<pre class="cl" style="left:-31.5px;top:172px"><span style="color:#a9b7c6;">            AbstractTranslet translet = (AbstractTranslet) </span><span style="color:#9876aa;">_class</span><span style="color:#a9b7c6;">[</span><span style="color:#9876aa;">_transletIndex</span><span style="color:#a9b7c6;">].newInstance()</span><span style="color:#cc7832;">;</span><span style="color:#a9b7c6;">  </span><span style="color:#5f8a73;font-style:italic;">translet: evilClass1@763  _class: Class[1]@738  _transletIndex: 0</span></pre>
<pre class="cl" style="left:-31.5px;top:194px"><span style="color:#a9b7c6;">            translet.postInitialization()</span><span style="color:#cc7832;">;</span><span style="color:#a9b7c6;">  </span><span style="color:#ffe800;font-style:italic;">translet: evilClass1@763</span></pre>
<pre class="cl" style="left:-31.5px;top:216px"><span style="color:#a9b7c6;">            translet.setTemplates(</span><span style="color:#cc7832;">this</span><span style="color:#a9b7c6;">)</span><span style="color:#cc7832;">;</span></pre>
<pre class="cl" style="left:-31.5px;top:238px"><span style="color:#a9b7c6;">            translet.setServicesMechnism(</span><span style="color:#9876aa;">_useServicesMechanism</span><span style="color:#a9b7c6;">)</span><span style="color:#cc7832;">;</span></pre>
<pre class="cl" style="left:-31.5px;top:260px"><span style="color:#a9b7c6;">            translet.setAllowedProtocols(</span><span style="color:#9876aa;">_accessExternalStylesheet</span><span style="color:#a9b7c6;">)</span><span style="color:#cc7832;">;</span></pre>
<pre class="cl" style="left:-31.5px;top:282px"><span style="color:#a9b7c6;">            </span><span style="color:#cc7832;">if </span><span style="color:#a9b7c6;">(</span><span style="color:#9876aa;">_auxClasses</span><span style="color:#a9b7c6;"> != </span><span style="color:#cc7832;">null</span><span style="color:#a9b7c6;">) {</span></pre>
<pre class="cl" style="left:-31.5px;top:304px"><span style="color:#a9b7c6;">                translet.setAuxiliaryClasses(</span><span style="color:#9876aa;">_auxClasses</span><span style="color:#a9b7c6;">)</span><span style="color:#cc7832;">;</span></pre>
<pre class="cl" style="left:-31.5px;top:326px"><span style="color:#a9b7c6;">            }</span></pre>
<pre class="cl" style="left:-31.5px;top:370px"><span style="color:#a9b7c6;">            </span><span style="color:#cc7832;">return </span><span style="color:#a9b7c6;">translet</span><span style="color:#cc7832;">;</span></pre>
<pre class="cl" style="left:-31.5px;top:392px"><span style="color:#a9b7c6;">        }</span></pre>
<pre class="cl" style="left:-31.5px;top:414px"><span style="color:#a9b7c6;">        </span><span style="color:#cc7832;">catch </span><span style="color:#a9b7c6;">(InstantiationException e) {</span></pre>
<pre class="cl" style="left:-31.5px;top:436px"><span style="color:#a9b7c6;">            ErrorMsg err = </span><span style="color:#cc7832;">new </span><span style="color:#a9b7c6;">ErrorMsg(ErrorMsg.</span><span style="color:#9876aa;font-style:italic;">TRANSLET_OBJECT_ERR</span><span style="color:#cc7832;">, </span><span style="color:#9876aa;">_name</span><span style="color:#a9b7c6;">)</span><span style="color:#cc7832;">;</span></pre>
<pre class="cl" style="left:-31.5px;top:458px"><span style="color:#a9b7c6;">            </span><span style="color:#cc7832;">throw new </span><span style="color:#a9b7c6;">TransformerConfigurationException(err.toString())</span><span style="color:#cc7832;">;</span></pre>
<pre class="cl" style="left:-31.5px;top:480px"><span style="color:#a9b7c6;">        }</span></pre>
<pre class="cl" style="left:-31.5px;top:502px"><span style="color:#a9b7c6;">        </span><span style="color:#cc7832;">catch </span><span style="color:#a9b7c6;">(IllegalAccessException e) {</span></pre>
</div>
<pre class="cl" style="left:656px;top:71px;color:#606366">447</pre>
<pre class="cl" style="left:656px;top:93px;color:#606366">448</pre>
<svg style="left:752px;top:74px;" width="11" height="40" viewBox="0 0 11 40"><path d="M5.500 0v2M5.500 13v27" stroke="#606366" stroke-width="1"/><path d="M.5 2.500h10v6L5.500 13 .5 8.500z" fill="#313335" stroke="#606366"/><path d="M3 6.500h5" stroke="#606366"/></svg>
<svg style="left:1884px;top:75px;" width="14" height="10" viewBox="0 0 14 10"><path d="M1 4.500l4 4 7.500-7.500" fill="none" stroke="#499c54" stroke-width="2.200"/></svg>
<div style="left:1884px;top:474px;width:13px;height:2px;background:#8b4a35;"></div>
<div style="left:1884px;top:538px;width:13px;height:2px;background:#8b4a35;"></div>
<div style="left:1884px;top:564px;width:13px;height:2px;background:#8b4a35;"></div>
<div style="left:1884px;top:510px;width:4px;height:2px;background:#8b4a35;"></div>
<div style="left:1884px;top:514px;width:4px;height:2px;background:#8b4a35;"></div>
<div style="left:1889px;top:495px;width:8px;height:34px;background:#a6a6a6;border-radius:1px;"></div>
<div style="left:796px;top:577px;width:1039px;height:8px;background:#505050;"></div>
<div style="left:651px;top:586px;width:1248px;height:24px;background:#313335;"></div>
<span class="t" style="letter-spacing:0.524px;left:797px;top:589.0px;line-height:20px;font-size:12.7px;color:#bbb;">latesImpl</span>
<svg style="left:863px;top:595px;" width="5" height="9" viewBox="0 0 5 9"><path d="M.8 .8L4 4.500.8 8.200" fill="none" stroke="#6e7072" stroke-width="1"/></svg>
<span class="t" style="letter-spacing:0.028px;left:877.3px;top:589.0px;line-height:20px;font-size:12.7px;color:#bbb;">getTransletInstance()</span>
<div style="left:22px;top:610px;width:1877px;height:26px;background:#3c3f41;"></div>
<div style="left:22px;top:610px;width:1877px;height:1px;background:#323537;"></div>
<span class="t" style="letter-spacing:0.130px;left:29.3px;top:613.5px;line-height:20px;font-size:12.7px;color:#bbb;">Debug:</span>
<div style="left:78px;top:611px;width:105px;height:25px;background:#313335;"></div>
<svg style="left:90px;top:616px;" width="17" height="16" viewBox="0 0 17 16"><rect x="1" y="1" width="10" height="8" fill="none" stroke="#8b8e90" stroke-width="1.300"/><rect x="4" y="4.500" width="11" height="9" fill="#313335" stroke="#4a8fc8" stroke-width="1.400"/><rect x="5.700" y="7" width="7.600" height="4.800" fill="#a3d4f7"/><circle cx="14" cy="14" r="2.100" fill="#3ddb3d"/></svg>
<span class="t" style="letter-spacing:0.077px;left:109.6px;top:613.5px;line-height:20px;font-size:12.7px;color:#bbb;">vulApp1</span>
<svg style="left:164.2px;top:620.5px;" width="7" height="7" viewBox="0 0 7 7"><path d="M0 0l7 7M7 0L0 7" stroke="#6e7072" stroke-width="1.200"/></svg>
<svg style="left:907.2px;top:616.5px;" width="13" height="13" viewBox="0 0 13 13"><g transform="translate(6.5 6.5)"><polygon points="-1.40,-4.07 -1.22,-6.28 1.22,-6.28 1.40,-4.07 2.82,-3.25 4.83,-4.20 6.05,-2.08 4.22,-0.82 4.22,0.82 6.05,2.08 4.83,4.20 2.82,3.25 1.40,4.07 1.22,6.28 -1.22,6.28 -1.40,4.07 -2.82,3.25 -4.83,4.20 -6.05,2.08 -4.22,0.82 -4.22,-0.82 -6.05,-2.08 -4.83,-4.20 -2.82,-3.25" fill="#afb1b3" stroke="#afb1b3" stroke-width=".5" stroke-linejoin="round"/><circle r="2.1" fill="#3c3f41"/></g></svg>
<div style="left:934.5px;top:622px;width:11px;height:2px;background:#afb1b3;"></div>
<div style="left:954px;top:610px;width:1px;height:360px;background:#323537;"></div>
<span class="t" style="letter-spacing:-0.127px;left:962.5px;top:613.5px;line-height:20px;font-size:12.7px;color:#bbb;">Event Log</span>
<svg style="left:1851.5px;top:616.5px;" width="13" height="13" viewBox="0 0 13 13"><g transform="translate(6.5 6.5)"><polygon points="-1.40,-4.07 -1.22,-6.28 1.22,-6.28 1.40,-4.07 2.82,-3.25 4.83,-4.20 6.05,-2.08 4.22,-0.82 4.22,0.82 6.05,2.08 4.83,4.20 2.82,3.25 1.40,4.07 1.22,6.28 -1.22,6.28 -1.40,4.07 -2.82,3.25 -4.83,4.20 -6.05,2.08 -4.22,0.82 -4.22,-0.82 -6.05,-2.08 -4.83,-4.20 -2.82,-3.25" fill="#afb1b3" stroke="#afb1b3" stroke-width=".5" stroke-linejoin="round"/><circle r="2.1" fill="#3c3f41"/></g></svg>
<div style="left:1878.2px;top:622px;width:11px;height:2px;background:#afb1b3;"></div>
<div style="left:22px;top:636px;width:932px;height:334px;background:#3c3f41;"></div>
<div style="left:22px;top:636px;width:932px;height:1px;background:#323537;"></div>
<span class="t" style="letter-spacing:-0.492px;left:57.2px;top:639.5px;line-height:20px;font-size:12.7px;color:#bbb;">Debugger</span>
<div style="left:113px;top:638px;width:1px;height:25px;background:#4b4d4f;"></div>
<svg style="left:119.5px;top:642px;" width="16" height="15" viewBox="0 0 16 15"><rect x=".7" y=".7" width="12.600" height="11" fill="none" stroke="#9aa7b0" stroke-width="1.400"/><rect x=".7" y=".7" width="12.600" height="2.800" fill="#4aa4d6"/><path d="M3 6h6M3 8.500h4" stroke="#9aa7b0" stroke-width="1.100"/><circle cx="11.500" cy="11" r="3.800" fill="#e8a33d"/><path d="M11.500 8.800v4M9.800 11.300l1.700 1.700 1.700-1.700" fill="none" stroke="#3c3f41" stroke-width="1"/></svg>
<span class="t" style="letter-spacing:-0.623px;left:137.8px;top:639.5px;line-height:20px;font-size:12.7px;color:#bbb;">Console</span>
<svg style="left:186.8px;top:643.5px;" width="12" height="9" viewBox="0 0 12 9"><path d="M0 5.500h6M4 3l2.500 2.500L4 8" fill="none" stroke="#8f9192" stroke-width="1.100"/><rect x="9" y="0" width="3" height="3" fill="#afb1b3"/></svg>
<div style="left:201.7px;top:637px;width:93px;height:26px;background:#4c5052;"></div>
<svg style="left:209px;top:643.5px;" width="12" height="13" viewBox="0 0 12 13"><path d="M0 1.500h12M0 5h12M0 8.500h12M0 12h12" stroke="#d4a25c" stroke-width="2.400"/></svg>
<span class="t" style="letter-spacing:-0.528px;left:225.8px;top:639.5px;line-height:20px;font-size:12.7px;color:#bbb;">Variables</span>
<svg style="left:279.7px;top:643.5px;" width="12" height="9" viewBox="0 0 12 9"><path d="M0 5.500h6M4 3l2.500 2.500L4 8" fill="none" stroke="#8f9192" stroke-width="1.100"/><rect x="9" y="0" width="3" height="3" fill="#afb1b3"/></svg>
<svg style="left:302px;top:643.5px;" width="12" height="13" viewBox="0 0 12 13"><path d="M0 1.500h12M0 8.500h12M0 12h12" stroke="#d0d0d0" stroke-width="2.200"/><path d="M0 5h12" stroke="#4aa4d6" stroke-width="2.400"/></svg>
<svg style="left:932px;top:643px;" width="16" height="14" viewBox="0 0 16 14"><path d="M2.500 12.500A6.300 6.300 0 1 1 14.500 9" fill="none" stroke="#afb1b3" stroke-width="1.600"/><path d="M7 11.500L12.500 5" stroke="#afb1b3" stroke-width="1.600"/><path d="M15.500 7v6.500H9z" fill="#f2c55c"/></svg>
<div style="left:51px;top:664px;width:903px;height:3px;background:#4f5456;"></div>
<div style="left:50px;top:637px;width:1px;height:333px;background:#4b4d4f;"></div>
<div style="left:75px;top:668px;width:1px;height:302px;background:#4b4d4f;"></div>
<svg style="left:27px;top:642px;" width="17" height="18" viewBox="0 0 17 18"><path d="M12.500 6.500A5.500 5.500 0 1 0 13.800 12" fill="none" stroke="#499c54" stroke-width="2.200"/><path d="M8.500 0.500l6.500 1.200-2 6z" fill="#499c54"/><rect x="10" y="12" width="6" height="6" fill="#afb1b3" stroke="#3c3f41" stroke-width="1"/></svg>
<div style="left:26px;top:667px;width:19px;height:1px;background:#515456;"></div>
<svg style="left:29px;top:677px;" width="14" height="14" viewBox="0 0 14 14"><rect x="0" y="0" width="3.200" height="14" fill="#499c54"/><path d="M5.500 0L14 7l-8.500 7z" fill="#499c54"/></svg>
<div style="left:31px;top:704px;width:3px;height:12px;background:#5e6163;"></div>
<div style="left:37px;top:704px;width:3px;height:12px;background:#5e6163;"></div>
<div style="left:30.5px;top:731px;width:11px;height:11px;background:#c75450;"></div>
<div style="left:26px;top:753px;width:19px;height:1px;background:#515456;"></div>
<svg style="left:28px;top:762px;" width="15" height="15" viewBox="0 0 15 15"><circle cx="10" cy="5" r="4.600" fill="#c75450"/><circle cx="5" cy="10" r="4.600" fill="#c75450" stroke="#3c3f41" stroke-width="1.200"/></svg>
<svg style="left:28px;top:788px;" width="15" height="15" viewBox="0 0 15 15"><circle cx="7.500" cy="7.500" r="5.200" fill="#c75450"/><path d="M1 14L14 1" stroke="#3c3f41" stroke-width="3.400"/><path d="M1.500 13.500L13.500 1.500" stroke="#c75450" stroke-width="1.400"/></svg>
<div style="left:26px;top:812px;width:19px;height:1px;background:#515456;"></div>
<svg style="left:28px;top:822px;" width="15" height="13" viewBox="0 0 15 13"><path d="M0 2.500h3.500l1.500-2.500h5l1.500 2.500H15V13H0z" fill="#afb1b3"/><circle cx="7.500" cy="7.500" r="3.300" fill="#3c3f41"/><circle cx="7.500" cy="7.500" r="1.900" fill="#afb1b3"/></svg>
<svg style="left:28px;top:855px;" width="14" height="12" viewBox="0 0 14 12"><rect x="0" y="0" width="14" height="5" fill="#afb1b3"/><rect x="0" y="6.500" width="6" height="5.500" fill="#afb1b3"/><rect x="7.500" y="6.500" width="6.500" height="5.500" fill="#afb1b3"/></svg>
<svg style="left:28.0px;top:881.5px;" width="13" height="13" viewBox="0 0 13 13"><g transform="translate(6.5 6.5)"><polygon points="-1.40,-4.07 -1.22,-6.28 1.22,-6.28 1.40,-4.07 2.82,-3.25 4.83,-4.20 6.05,-2.08 4.22,-0.82 4.22,0.82 6.05,2.08 4.83,4.20 2.82,3.25 1.40,4.07 1.22,6.28 -1.22,6.28 -1.40,4.07 -2.82,3.25 -4.83,4.20 -6.05,2.08 -4.22,0.82 -4.22,-0.82 -6.05,-2.08 -4.83,-4.20 -2.82,-3.25" fill="#afb1b3" stroke="#afb1b3" stroke-width=".5" stroke-linejoin="round"/><circle r="2.1" fill="#3c3f41"/></g></svg>
<svg style="left:41px;top:892px;" width="5" height="4" viewBox="0 0 5 4"><path d="M0 0h5L2.500 3.500z" fill="#afb1b3"/></svg>
<div style="left:26px;top:904px;width:19px;height:1px;background:#515456;"></div>
<svg style="left:27px;top:912px;" width="16" height="16" viewBox="0 0 16 16"><path d="M9.500 0.500l6 6-2 .6-3 3 .3 3.400-1.600 1.600-3.400-3.400L1 16.500l-.8-.8 4.800-4.800L1.600 7.500 3.200 6l3.400.3 3-3z" fill="#afb1b3"/></svg>
<svg style="left:56.5px;top:674px;" width="13" height="13" viewBox="0 0 13 13"><path d="M6.500 0v13M0 6.500h13" stroke="#d0d0d0" stroke-width="1.800"/></svg>
<div style="left:56.5px;top:706px;width:13px;height:2px;background:#5e6163;"></div>
<svg style="left:56px;top:729px;" width="13" height="7" viewBox="0 0 13 7"><path d="M0 7L6.500 0 13 7z" fill="#5e6163"/></svg>
<svg style="left:56px;top:755px;" width="13" height="7" viewBox="0 0 13 7"><path d="M0 0h13L6.500 7z" fill="#5e6163"/></svg>
<svg style="left:56px;top:777px;" width="14" height="15" viewBox="0 0 14 15"><path d="M.7 .7h8v2M.7 .7v9h2" fill="none" stroke="#afb1b3" stroke-width="1.400"/><rect x="3.500" y="3.500" width="9.500" height="10.500" fill="#afb1b3"/><path d="M5.500 6.500h5.500M5.500 8.700h5.500M5.500 11h5.500" stroke="#3c3f41" stroke-width="1"/></svg>
<div style="left:53px;top:800px;width:20px;height:21px;box-sizing:border-box;border:1px solid #6e7173;border-radius:3px;background:#4c5052"></div>
<svg style="left:55px;top:807px;" width="16" height="7" viewBox="0 0 16 7"><circle cx="3.600" cy="3.500" r="2.700" fill="none" stroke="#c4c6c8" stroke-width="1.500"/><circle cx="12.400" cy="3.500" r="2.700" fill="none" stroke="#c4c6c8" stroke-width="1.500"/><path d="M6.300 3h3.400" stroke="#c4c6c8" stroke-width="1.300"/></svg>
<div style="left:76px;top:815px;width:878px;height:21px;background:#0d293e;"></div>
<div style="left:76px;top:668px;width:878px;height:302px;overflow:hidden">
<svg style="left:19.5px;top:7.0px;" width="16" height="7" viewBox="0 0 16 7"><circle cx="3.600" cy="3.500" r="2.700" fill="none" stroke="#c4c6c8" stroke-width="1.500"/><circle cx="12.400" cy="3.500" r="2.700" fill="none" stroke="#c4c6c8" stroke-width="1.500"/><path d="M6.300 3h3.400" stroke="#c4c6c8" stroke-width="1.300"/></svg>
<span class="t" style="letter-spacing:0.063px;left:39.599999999999994px;top:0.5px;line-height:20px;font-size:12.7px;color:#ee7468;">_tfactory.getExternalExtensionsMap()</span>
<svg style="left:4.0px;top:26.5px;" width="8" height="10" viewBox="0 0 8 10"><path d="M0 0L8 5L0 10z" fill="#a3a5a6"/></svg>
<svg style="left:19.5px;top:28.0px;" width="16" height="7" viewBox="0 0 16 7"><circle cx="3.600" cy="3.500" r="2.700" fill="none" stroke="#c4c6c8" stroke-width="1.500"/><circle cx="12.400" cy="3.500" r="2.700" fill="none" stroke="#c4c6c8" stroke-width="1.500"/><path d="M6.300 3h3.400" stroke="#c4c6c8" stroke-width="1.300"/></svg>
<span class="t" style="letter-spacing:0.048px;left:39.599999999999994px;top:21.5px;line-height:20px;font-size:12.7px;color:#ee7468;">ObjectFactory.findClassLoader()</span>
<span class="t" style="left:228.0px;top:21.5px;line-height:20px;font-size:12.7px;color:#bbb;">= null</span>
<svg style="left:4.0px;top:47.5px;" width="8" height="10" viewBox="0 0 8 10"><path d="M0 0L8 5L0 10z" fill="#a3a5a6"/></svg>
<svg style="left:22.0px;top:46.5px;" width="12.5" height="12" viewBox="0 0 12.5 12"><path d="M0 1.200h12.500M0 4.400h12.500M0 7.600h12.500M0 10.800h12.500" stroke="#cfa25e" stroke-width="2.200"/></svg>
<span class="t" style="letter-spacing:-0.137px;left:38.8px;top:42.5px;line-height:20px;font-size:12.7px;color:#ee7468;">this</span>
<span class="t" style="left:62.5px;top:42.5px;line-height:20px;font-size:12.7px;color:#bbb;">=</span>
<span class="t" style="letter-spacing:0.220px;left:74.30000000000001px;top:42.5px;line-height:20px;font-size:12.7px;color:#868686;">{TemplatesImpl@710}</span>
<svg style="left:4.0px;top:68.5px;" width="8" height="10" viewBox="0 0 8 10"><path d="M0 0L8 5L0 10z" fill="#a3a5a6"/></svg>
<svg style="left:22.0px;top:67.5px;" width="12.5" height="12" viewBox="0 0 12.5 12"><path d="M0 1.200h12.500M0 4.400h12.500M0 7.600h12.500M0 10.800h12.500" stroke="#cfa25e" stroke-width="2.200"/></svg>
<span class="t" style="letter-spacing:0.199px;left:38.8px;top:63.5px;line-height:20px;font-size:12.7px;color:#ee7468;">translet</span>
<span class="t" style="left:86.5px;top:63.5px;line-height:20px;font-size:12.7px;color:#bbb;">=</span>
<span class="t" style="letter-spacing:-0.228px;left:99.30000000000001px;top:63.5px;line-height:20px;font-size:12.7px;color:#868686;">{evilClass1@763}</span>
<svg style="left:19.5px;top:91.0px;" width="16" height="7" viewBox="0 0 16 7"><circle cx="3.600" cy="3.500" r="2.700" fill="none" stroke="#c4c6c8" stroke-width="1.500"/><circle cx="12.400" cy="3.500" r="2.700" fill="none" stroke="#c4c6c8" stroke-width="1.500"/><path d="M6.300 3h3.400" stroke="#c4c6c8" stroke-width="1.300"/></svg>
<span class="t" style="letter-spacing:-0.192px;left:39.599999999999994px;top:84.5px;line-height:20px;font-size:12.7px;color:#ee7468;">_useServicesMechanism</span>
<span class="t" style="letter-spacing:0.138px;left:181.89999999999998px;top:84.5px;line-height:20px;font-size:12.7px;color:#bbb;">= false</span>
<svg style="left:4.0px;top:110.5px;" width="8" height="10" viewBox="0 0 8 10"><path d="M0 0L8 5L0 10z" fill="#a3a5a6"/></svg>
<svg style="left:19.5px;top:112.0px;" width="16" height="7" viewBox="0 0 16 7"><circle cx="3.600" cy="3.500" r="2.700" fill="none" stroke="#c4c6c8" stroke-width="1.500"/><circle cx="12.400" cy="3.500" r="2.700" fill="none" stroke="#c4c6c8" stroke-width="1.500"/><path d="M6.300 3h3.400" stroke="#c4c6c8" stroke-width="1.300"/></svg>
<span class="t" style="letter-spacing:-0.119px;left:39.599999999999994px;top:105.5px;line-height:20px;font-size:12.7px;color:#ee7468;">_class[_transletIndex]</span>
<span class="t" style="left:164.5px;top:105.5px;line-height:20px;font-size:12.7px;color:#bbb;">=</span>
<span class="t" style="letter-spacing:-0.341px;left:177.0px;top:105.5px;line-height:20px;font-size:12.7px;color:#868686;">{Class@739}</span>
<span class="t" style="letter-spacing:-0.012px;left:252.5px;top:105.5px;line-height:20px;font-size:12.7px;color:#bbb;">"class ka1n4t.poc.evilClass1"</span>
<span class="t" style="letter-spacing:0.068px;left:419.5px;top:105.5px;line-height:20px;font-size:12.7px;color:#4a78b0;">... Navigate</span>
<svg style="left:3.0px;top:133.0px;" width="10" height="7" viewBox="0 0 10 7"><path d="M0 0h10L5 7z" fill="#a3a5a6"/></svg>
<svg style="left:19.5px;top:133.0px;" width="16" height="7" viewBox="0 0 16 7"><circle cx="3.600" cy="3.500" r="2.700" fill="none" stroke="#c4c6c8" stroke-width="1.500"/><circle cx="12.400" cy="3.500" r="2.700" fill="none" stroke="#c4c6c8" stroke-width="1.500"/><path d="M6.300 3h3.400" stroke="#c4c6c8" stroke-width="1.300"/></svg>
<span class="t" style="letter-spacing:-0.761px;left:40.0px;top:126.5px;line-height:20px;font-size:12.7px;color:#ee7468;">_class</span>
<span class="t" style="left:76.0px;top:126.5px;line-height:20px;font-size:12.7px;color:#bbb;">=</span>
<span class="t" style="letter-spacing:-0.197px;left:89.0px;top:126.5px;line-height:20px;font-size:12.7px;color:#868686;">{Class[1]@738}</span>
<svg style="left:20.700000000000003px;top:154.0px;" width="10" height="7" viewBox="0 0 10 7"><path d="M0 0h10L5 7z" fill="#a3a5a6"/></svg>
<svg style="left:40.0px;top:151.5px;" width="12.5" height="12" viewBox="0 0 12.5 12"><path d="M0 1.200h12.500M0 4.400h12.500M0 7.600h12.500M0 10.800h12.500" stroke="#cfa25e" stroke-width="2.200"/></svg>
<span class="t" style="left:57.19999999999999px;top:147.5px;line-height:20px;font-size:12.7px;color:#ee7468;">0</span>
<span class="t" style="left:68.0px;top:147.5px;line-height:20px;font-size:12.7px;color:#bbb;">=</span>
<span class="t" style="letter-spacing:-0.350px;left:80.6px;top:147.5px;line-height:20px;font-size:12.7px;color:#868686;">{Class@739}</span>
<span class="t" style="letter-spacing:-0.012px;left:156.0px;top:147.5px;line-height:20px;font-size:12.7px;color:#d8d8d8;">"class ka1n4t.poc.evilClass1"</span>
<span class="t" style="letter-spacing:0.068px;left:323.0px;top:147.5px;line-height:20px;font-size:12.7px;color:#4f7eb5;">... Navigate</span>
<svg style="left:40.0px;top:173.5px;" width="8" height="10" viewBox="0 0 8 10"><path d="M0 0L8 5L0 10z" fill="#a3a5a6"/></svg>
<svg style="left:57.0px;top:171.5px;" width="14" height="14" viewBox="0 0 14 14"><circle cx="7" cy="7" r="7" fill="#b58a3a"/><path d="M5.400 11V5.200c0-1.500 .9-2.100 2.600-1.800M3.800 6.500h4.200" fill="none" stroke="#3a3222" stroke-width="1.300"/></svg>
<span class="t" style="letter-spacing:0.088px;left:75.0px;top:168.5px;line-height:20px;font-size:12.7px;color:#4a90e2;">cachedConstructor</span>
<span class="t" style="left:188.0px;top:168.5px;line-height:20px;font-size:12.7px;color:#bbb;">=</span>
<span class="t" style="letter-spacing:0.052px;left:200.0px;top:168.5px;line-height:20px;font-size:12.7px;color:#868686;">{Constructor@766}</span>
<span class="t" style="letter-spacing:0.097px;left:314.0px;top:168.5px;line-height:20px;font-size:12.7px;color:#bbb;">"public ka1n4t.poc.evilClass1() throws java.io.IOException"</span>
<svg style="left:57.0px;top:192.5px;" width="14" height="14" viewBox="0 0 14 14"><circle cx="7" cy="7" r="7" fill="#b58a3a"/><path d="M5.400 11V5.200c0-1.500 .9-2.100 2.600-1.800M3.800 6.500h4.200" fill="none" stroke="#3a3222" stroke-width="1.300"/></svg>
<span class="t" style="letter-spacing:-0.103px;left:75.0px;top:189.5px;line-height:20px;font-size:12.7px;color:#ee7468;">newInstanceCallerCache</span>
<span class="t" style="letter-spacing:0.285px;left:218.0px;top:189.5px;line-height:20px;font-size:12.7px;color:#bbb;">= null</span>
<svg style="left:40.0px;top:215.5px;" width="8" height="10" viewBox="0 0 8 10"><path d="M0 0L8 5L0 10z" fill="#a3a5a6"/></svg>
<svg style="left:57.0px;top:213.5px;" width="14" height="14" viewBox="0 0 14 14"><circle cx="7" cy="7" r="7" fill="#b58a3a"/><path d="M5.400 11V5.200c0-1.500 .9-2.100 2.600-1.800M3.800 6.500h4.200" fill="none" stroke="#3a3222" stroke-width="1.300"/></svg>
<span class="t" style="letter-spacing:0.062px;left:75.0px;top:210.5px;line-height:20px;font-size:12.7px;color:#ee7468;">name</span>
<span class="t" style="left:111.5px;top:210.5px;line-height:20px;font-size:12.7px;color:#bbb;">=</span>
<span class="t" style="letter-spacing:-0.032px;left:124.80000000000001px;top:210.5px;line-height:20px;font-size:12.7px;color:#6a8759;">"ka1n4t.poc.evilClass1"</span>
<svg style="left:40.0px;top:236.5px;" width="8" height="10" viewBox="0 0 8 10"><path d="M0 0L8 5L0 10z" fill="#a3a5a6"/></svg>
<svg style="left:57.0px;top:234.5px;" width="14" height="14" viewBox="0 0 14 14"><circle cx="7" cy="7" r="7" fill="#b58a3a"/><path d="M5.400 11V5.200c0-1.500 .9-2.100 2.600-1.800M3.800 6.500h4.200" fill="none" stroke="#3a3222" stroke-width="1.300"/><circle cx="1.800" cy="1.800" r="2.300" fill="#c4cdd3"/></svg>
<span class="t" style="letter-spacing:0.016px;left:75.0px;top:231.5px;line-height:20px;font-size:12.7px;color:#ee7468;">classLoader</span>
<span class="t" style="left:148.0px;top:231.5px;line-height:20px;font-size:12.7px;color:#bbb;">=</span>
<span class="t" style="letter-spacing:0.078px;left:161.0px;top:231.5px;line-height:20px;font-size:12.7px;color:#868686;">{TemplatesImpl$TransletClassLoader@735}</span>
<svg style="left:40.0px;top:257.5px;" width="8" height="10" viewBox="0 0 8 10"><path d="M0 0L8 5L0 10z" fill="#a3a5a6"/></svg>
<svg style="left:57.0px;top:255.5px;" width="14" height="14" viewBox="0 0 14 14"><circle cx="7" cy="7" r="7" fill="#b58a3a"/><path d="M5.400 11V5.200c0-1.500 .9-2.100 2.600-1.800M3.800 6.500h4.200" fill="none" stroke="#3a3222" stroke-width="1.300"/></svg>
<span class="t" style="letter-spacing:0.144px;left:75.0px;top:252.5px;line-height:20px;font-size:12.7px;color:#4a90e2;">reflectionData</span>
<span class="t" style="left:160.0px;top:252.5px;line-height:20px;font-size:12.7px;color:#bbb;">=</span>
<span class="t" style="letter-spacing:-0.055px;left:172.0px;top:252.5px;line-height:20px;font-size:12.7px;color:#868686;">{SoftReference@767}</span>
<svg style="left:57.0px;top:276.5px;" width="14" height="14" viewBox="0 0 14 14"><circle cx="7" cy="7" r="7" fill="#b58a3a"/><path d="M5.400 11V5.200c0-1.500 .9-2.100 2.600-1.800M3.800 6.500h4.200" fill="none" stroke="#3a3222" stroke-width="1.300"/></svg>
<span class="t" style="letter-spacing:0.047px;left:75.0px;top:273.5px;line-height:20px;font-size:12.7px;color:#ee7468;">classRedefinedCount</span>
<span class="t" style="letter-spacing:0.333px;left:201.0px;top:273.5px;line-height:20px;font-size:12.7px;color:#bbb;">= 0</span>
<svg style="left:57.0px;top:297.5px;" width="14" height="14" viewBox="0 0 14 14"><circle cx="7" cy="7" r="7" fill="#b58a3a"/><path d="M5.400 11V5.200c0-1.500 .9-2.100 2.600-1.800M3.800 6.500h4.200" fill="none" stroke="#3a3222" stroke-width="1.300"/></svg>
<span class="t" style="letter-spacing:0.474px;left:75.0px;top:294.5px;line-height:20px;font-size:12.7px;color:#ee7468;">genericInfo</span>
<span class="t" style="left:147.5px;top:294.5px;line-height:20px;font-size:12.7px;color:#bbb;">= null</span>
</div>
<div style="left:945px;top:669px;width:8px;height:205px;background:#5a5d5f;"></div>
<div style="left:955px;top:636px;width:28px;height:334px;background:#3c3f41;"></div>
<div style="left:955px;top:636px;width:944px;height:1px;background:#323537;"></div>
<div style="left:983px;top:637px;width:915px;height:333px;background:#2b2b2b;"></div>
<svg style="left:962px;top:644px;" width="15" height="15" viewBox="0 0 15 15"><rect x="1" y="3" width="10.500" height="10.500" fill="none" stroke="#5e6163" stroke-width="1.500"/><path d="M3.500 8l2.500 2.700L13.500 2" fill="none" stroke="#5e6163" stroke-width="1.800"/></svg>
<svg style="left:963.5px;top:670px;" width="11" height="14" viewBox="0 0 11 14"><rect x="0" y="2" width="11" height="1.800" fill="#afb1b3"/><rect x="3.500" y="0" width="4" height="2" fill="#afb1b3"/><path d="M1 5h9v9H1z" fill="#afb1b3"/></svg>
<div style="left:961px;top:693px;width:17px;height:1px;background:#515456;"></div>
<svg style="left:961.5px;top:703px;" width="15" height="15" viewBox="0 0 15 15"><path d="M14.500 3.500a4 4 0 0 1-5.300 4.600L3 14.500 0.800 12.300 7 6A4 4 0 0 1 11.500 .7L9 3.200l.6 2.300 2.300.6z" fill="#afb1b3"/></svg>
<span class="t" style="letter-spacing:0.314px;left:988.3px;top:635.5px;line-height:20px;font-size:12.7px;color:#bbb;">2018/11/19</span>
<span class="t" style="letter-spacing:-0.210px;left:988.3px;top:653.0px;line-height:20px;font-size:12.7px;color:#bbb;">22:10</span>
<span class="t" style="letter-spacing:0.188px;left:1019.7px;top:653.0px;line-height:20px;font-size:12.7px;color:#3d85e0;text-decoration:underline;">Compilation completed successfully with 3 warnings in 5 s 211 ms</span>
<span class="t" style="letter-spacing:-0.210px;left:988.3px;top:686.7px;line-height:20px;font-size:12.7px;color:#bbb;">22:15</span>
<span class="t" style="letter-spacing:0.303px;left:1020px;top:686.7px;line-height:20px;font-size:12.7px;color:#bbb;">All files are up-to-date</span>
<span class="t" style="letter-spacing:-0.210px;left:988.3px;top:720.7px;line-height:20px;font-size:12.7px;color:#bbb;">22:16</span>
<span class="t" style="letter-spacing:0.303px;left:1020px;top:720.7px;line-height:20px;font-size:12.7px;color:#bbb;">All files are up-to-date</span>
<span class="t" style="letter-spacing:-0.210px;left:988.3px;top:754.7px;line-height:20px;font-size:12.7px;color:#bbb;">22:24</span>
<span class="t" style="letter-spacing:0.303px;left:1020px;top:754.7px;line-height:20px;font-size:12.7px;color:#bbb;">All files are up-to-date</span>
<span class="t" style="letter-spacing:-0.210px;left:988.3px;top:788.7px;line-height:20px;font-size:12.7px;color:#bbb;">22:24</span>
<span class="t" style="letter-spacing:0.303px;left:1020px;top:788.7px;line-height:20px;font-size:12.7px;color:#bbb;">All files are up-to-date</span>
<span class="t" style="letter-spacing:-0.210px;left:988.3px;top:822.7px;line-height:20px;font-size:12.7px;color:#bbb;">22:25</span>
<span class="t" style="letter-spacing:0.303px;left:1020px;top:822.7px;line-height:20px;font-size:12.7px;color:#bbb;">All files are up-to-date</span>
<span class="t" style="letter-spacing:-0.210px;left:988.3px;top:856.7px;line-height:20px;font-size:12.7px;color:#bbb;">22:57</span>
<span class="t" style="letter-spacing:0.303px;left:1020px;top:856.7px;line-height:20px;font-size:12.7px;color:#bbb;">All files are up-to-date</span>
<div style="left:0px;top:970px;width:1920px;height:24px;background:#3c3f41;"></div>
<div style="left:0px;top:970px;width:1920px;height:1px;background:#515151;"></div>
<div style="left:0px;top:992px;width:1920px;height:1px;background:#4b4b4b;"></div>
<div style="left:19px;top:971px;width:84.5px;height:21px;background:#2d2f30;"></div>
<svg style="left:30px;top:975px;" width="14" height="15" viewBox="0 0 14 15"><ellipse cx="6" cy="8" rx="3.900" ry="4.700" fill="#afb1b3"/><circle cx="6" cy="3" r="2.200" fill="#afb1b3"/><path d="M0 5.500h3M9 5.500h3M0 8.500h2.500M9.500 8.500H12M.5 12.500l2.500-1.500M11.500 12.500L9 11M2 .5l2 2M10 .5l-2 2" stroke="#afb1b3" stroke-width="1.100"/><circle cx="11.300" cy="12.300" r="2" fill="#3ddb3d"/></svg>
<span class="t" style="letter-spacing:-0.252px;left:47px;top:972.5px;line-height:20px;font-size:12px;color:#e0e0e0;"><u>5</u>: Debug</span>
<svg style="left:117px;top:977.5px;" width="10" height="10" viewBox="0 0 10 10"><path d="M0 1.500h1.800M0 5h1.800M0 8.500h1.800" stroke="#afb1b3" stroke-width="1.600"/><path d="M3.500 1.500H10M3.500 5H10M3.500 8.500H10" stroke="#afb1b3" stroke-width="1.600"/></svg>
<span class="t" style="letter-spacing:-0.585px;left:132px;top:972.5px;line-height:20px;font-size:12px;color:#bbb;"><u>6</u>: TODO</span>
<svg style="left:197px;top:976px;" width="13" height="12" viewBox="0 0 13 12"><path d="M1 10C0 4 5 1 12.500 .5 12.500 7 9 11.500 3 10.500L1.500 12z" fill="#afb1b3"/></svg>
<span class="t" style="letter-spacing:-0.115px;left:214px;top:972.5px;line-height:20px;font-size:12px;color:#bbb;">Spring</span>
<svg style="left:268.5px;top:976.5px;" width="12" height="11" viewBox="0 0 12 11"><rect width="12" height="11" fill="#afb1b3"/><path d="M2.500 3l3 2.500-3 2.500M6.500 8.500h3.500" fill="none" stroke="#3c3f41" stroke-width="1.300"/></svg>
<span class="t" style="letter-spacing:-0.107px;left:285px;top:972.5px;line-height:20px;font-size:12px;color:#bbb;">Terminal</span>
<svg style="left:352px;top:977px;" width="13" height="10" viewBox="0 0 13 10"><rect x=".6" y=".6" width="11.800" height="8.800" fill="none" stroke="#afb1b3" stroke-width="1.200"/><path d="M3 3h3M3 5h3M3 7h3M7.500 3h3M7.500 5h3M7.500 7h3" stroke="#afb1b3" stroke-width="1.100"/></svg>
<span class="t" style="letter-spacing:-0.392px;left:368.5px;top:972.5px;line-height:20px;font-size:12px;color:#bbb;">Java Enterprise</span>
<div style="left:1810px;top:971px;width:89px;height:21px;background:#2d2f30;"></div>
<svg style="left:1821px;top:976px;" width="14" height="14" viewBox="0 0 14 14"><path d="M12.500 7A5.500 5.500 0 1 0 7 12.500H12.500z" fill="none" stroke="#c4c6c8" stroke-width="1.500"/></svg>
<span class="t" style="letter-spacing:-0.316px;left:1838.5px;top:972.5px;line-height:20px;font-size:12px;color:#e0e0e0;">Event Log</span>
<div style="left:0px;top:993px;width:1920px;height:12px;background:#3c3f41;"></div>
<svg style="left:11px;top:997.5px;" width="12" height="10" viewBox="0 0 12 10"><rect x=".7" y=".7" width="10.600" height="10" fill="none" stroke="#afb1b3" stroke-width="1.400"/></svg>
<span class="t" style="letter-spacing:0.237px;left:32px;top:994.0px;line-height:20px;font-size:12.7px;color:#a0a2a3;">All files are up-to-date (a minute ago)</span>
<span class="t" style="letter-spacing:-0.350px;left:1758px;top:994.0px;line-height:20px;font-size:12.7px;color:#a0a2a3;">456:1</span>
<span class="t" style="letter-spacing:-1.200px;left:1804px;top:994.0px;line-height:20px;font-size:12.7px;color:#a0a2a3;">LF</span>
<span class="t" style="letter-spacing:-0.451px;left:1829px;top:994.0px;line-height:20px;font-size:12.7px;color:#a0a2a3;">UTF-8</span>
<svg style="left:1877px;top:997px;" width="10" height="10" viewBox="0 0 10 10"><rect x="0" y="4.500" width="9" height="6" fill="#afb1b3"/><path d="M2 4.500v-2a2.500 2.500 0 0 1 5 0v2" fill="none" stroke="#afb1b3" stroke-width="1.400"/></svg>
<svg style="left:1899px;top:998px;" width="14" height="8" viewBox="0 0 14 8"><path d="M1 8V4a6 6 0 0 1 12 0v4" fill="none" stroke="#8f9192" stroke-width="1.300"/><path d="M0 6h14" stroke="#8f9192" stroke-width="1.200"/></svg>
<div style="left:310px;top:106px;width:488px;height:680px;background:#2aa3c6;"></div>
<div style="left:311px;top:107px;width:486px;height:678px;background:#e6e6e6;"></div>
<span class="t" style="letter-spacing:-0.005px;left:323px;top:112.5px;line-height:20px;font-size:12px;color:#000;">计算器</span>
<svg style="left:677px;top:118px;" width="10" height="10" viewBox="0 0 10 10"><path d="M0 4.500h10" stroke="#000" stroke-width="1"/></svg>
<svg style="left:723px;top:117px;" width="10" height="10" viewBox="0 0 10 10"><rect x=".5" y=".5" width="9" height="9" fill="none" stroke="#000" stroke-width="1"/></svg>
<svg style="left:769px;top:117px;" width="10" height="10" viewBox="0 0 10 10"><path d="M0 0l10 10M10 0L0 10" stroke="#000" stroke-width="1.100"/></svg>
<svg style="left:327px;top:158px;" width="16" height="11" viewBox="0 0 16 11"><path d="M0 1h16M0 5.500h16M0 10h16" stroke="#000" stroke-width="1"/></svg>
<span class="t" style="letter-spacing:0.000px;left:363px;top:153.0px;line-height:20px;font-size:20px;color:#000;line-height:30px;margin-top:-5px;">标准</span>
<svg style="left:769px;top:152px;" width="18" height="18" viewBox="0 0 18 18"><path d="M3.300 5.500A7 7 0 1 1 2.500 10" fill="none" stroke="#000" stroke-width="1.100"/><path d="M1 2.500v4h4" fill="none" stroke="#000" stroke-width="1.100"/><path d="M9 5v4.500l3 2" fill="none" stroke="#000" stroke-width="1.100"/></svg>
<span class="t" style="left:757.5px;top:231.5px;line-height:20px;font-size:47.5px;color:#000;line-height:50px;margin-top:-15px;-webkit-text-stroke:.6px #000;transform:scaleX(.9);transform-origin:100% 50%;">0</span>
<span class="t" style="letter-spacing:-0.486px;left:345.3px;top:323.0px;line-height:20px;font-size:12px;color:#b0b0b0;">MC</span>
<span class="t" style="letter-spacing:-0.336px;left:425.5px;top:323.0px;line-height:20px;font-size:12px;color:#b0b0b0;">MR</span>
<span class="t" style="letter-spacing:0.492px;left:504.3px;top:323.0px;line-height:20px;font-size:12px;color:#000;font-weight:bold;">M+</span>
<span class="t" style="letter-spacing:0.300px;left:586.4px;top:323.0px;line-height:20px;font-size:12px;color:#000;font-weight:bold;">M-</span>
<span class="t" style="letter-spacing:-0.200px;left:665px;top:323.0px;line-height:20px;font-size:12px;color:#000;font-weight:bold;">MS</span>
<span class="t" style="letter-spacing:0.400px;left:746.6px;top:323.0px;line-height:20px;font-size:12px;color:#b0b0b0;">M</span>
<svg style="left:757px;top:327px;" width="5" height="4" viewBox="0 0 5 4"><path d="M.5 .5L2.500 3 4.500 .5" fill="none" stroke="#b0b0b0" stroke-width="1"/></svg>
<div style="left:315px;top:354.9px;width:118px;height:69.4px;background:#f0f0f0;"></div>
<div style="left:435px;top:354.9px;width:118px;height:69.4px;background:#f0f0f0;"></div>
<div style="left:555px;top:354.9px;width:118px;height:69.4px;background:#f0f0f0;"></div>
<div style="left:675px;top:354.9px;width:118.5px;height:69.4px;background:#f0f0f0;"></div>
<div style="left:315px;top:426.3px;width:118px;height:69.4px;background:#f0f0f0;"></div>
<div style="left:435px;top:426.3px;width:118px;height:69.4px;background:#f0f0f0;"></div>
<div style="left:555px;top:426.3px;width:118px;height:69.4px;background:#f0f0f0;"></div>
<div style="left:675px;top:426.3px;width:118.5px;height:69.4px;background:#f0f0f0;"></div>
<div style="left:315px;top:497.7px;width:118px;height:69.4px;background:#fafafa;"></div>
<div style="left:435px;top:497.7px;width:118px;height:69.4px;background:#fafafa;"></div>
<div style="left:555px;top:497.7px;width:118px;height:69.4px;background:#fafafa;"></div>
<div style="left:675px;top:497.7px;width:118.5px;height:69.4px;background:#f0f0f0;"></div>
<div style="left:315px;top:569px;width:118px;height:69.4px;background:#fafafa;"></div>
<div style="left:435px;top:569px;width:118px;height:69.4px;background:#fafafa;"></div>
<div style="left:555px;top:569px;width:118px;height:69.4px;background:#fafafa;"></div>
<div style="left:675px;top:569px;width:118.5px;height:69.4px;background:#f0f0f0;"></div>
<div style="left:315px;top:640.4px;width:118px;height:69.4px;background:#fafafa;"></div>
<div style="left:435px;top:640.4px;width:118px;height:69.4px;background:#fafafa;"></div>
<div style="left:555px;top:640.4px;width:118px;height:69.4px;background:#fafafa;"></div>
<div style="left:675px;top:640.4px;width:118.5px;height:69.4px;background:#f0f0f0;"></div>
<div style="left:315px;top:711.8px;width:118px;height:69.4px;background:#f0f0f0;"></div>
<div style="left:435px;top:711.8px;width:118px;height:69.4px;background:#fafafa;"></div>
<div style="left:555px;top:711.8px;width:118px;height:69.4px;background:#f0f0f0;"></div>
<div style="left:675px;top:711.8px;width:118.5px;height:69.4px;background:#f0f0f0;"></div>
<span class="t" style="left:333.5px;top:370px;width:80px;text-align:center;line-height:40px;font-size:25px;color:#000;font-family:'DejaVu Sans Light','DejaVu Sans',sans-serif;font-weight:200;transform:scaleX(.84);">%</span>
<span class="t" style="left:452.5px;top:371px;width:80px;text-align:center;line-height:40px;font-size:25px;color:#000;font-family:'Liberation Serif','DejaVu Serif',serif;">√</span>
<span class="t" style="left:573.8px;top:369px;width:80px;text-align:center;line-height:40px;font-size:23px;color:#000;font-family:'Liberation Serif','DejaVu Serif',serif;"><i>x</i><span style="font-size:11px;position:relative;top:-8px;font-family:'Liberation Sans','Noto Sans CJK SC',sans-serif">2</span></span>
<span class="t" style="left:693.7px;top:369px;width:80px;text-align:center;line-height:40px;font-size:23px;color:#000;font-family:'Liberation Serif','DejaVu Serif',serif;"><span style="font-size:11px;position:relative;top:-6px;font-family:'Liberation Sans','Noto Sans CJK SC',sans-serif">1</span><span style="font-family:'DejaVu Sans Light','DejaVu Sans',sans-serif;font-weight:200;font-size:20px">/</span><i>x</i></span>
<span class="t" style="left:333.8px;top:442px;width:80px;text-align:center;line-height:40px;font-size:18.5px;color:#000;letter-spacing:-1.600px;transform:scaleX(.93);">CE</span>
<span class="t" style="left:454.2px;top:442px;width:80px;text-align:center;line-height:40px;font-size:18.5px;color:#000;transform:scaleX(.85);">C</span>
<svg style="left:604px;top:453px;" width="21" height="15" viewBox="0 0 21 15"><path d="M6.500 .6H20v13.300H6.500L.8 7.200z" fill="none" stroke="#000" stroke-width="1.150"/><path d="M9.800 4l6.300 6.400M16.100 4L9.800 10.400" stroke="#000" stroke-width="1.150"/></svg>
<span class="t" style="left:693.7px;top:440px;width:80px;text-align:center;line-height:40px;font-size:27px;color:#000;font-family:'DejaVu Sans Light','DejaVu Sans',sans-serif;font-weight:200;">÷</span>
<span class="t" style="left:693.7px;top:512px;width:80px;text-align:center;line-height:40px;font-size:27px;color:#000;font-family:'DejaVu Sans Light','DejaVu Sans',sans-serif;font-weight:200;">×</span>
<span class="t" style="left:693.7px;top:583.5px;width:80px;text-align:center;line-height:40px;font-size:27px;color:#000;font-family:'DejaVu Sans Light','DejaVu Sans',sans-serif;font-weight:200;">−</span>
<span class="t" style="left:693.7px;top:655px;width:80px;text-align:center;line-height:40px;font-size:27px;color:#000;font-family:'DejaVu Sans Light','DejaVu Sans',sans-serif;font-weight:200;">+</span>
<span class="t" style="left:693.7px;top:726.5px;width:80px;text-align:center;line-height:40px;font-size:27px;color:#000;font-family:'DejaVu Sans Light','DejaVu Sans',sans-serif;font-weight:200;">=</span>
<span class="t" style="left:333.5px;top:514px;width:80px;text-align:center;line-height:40px;font-size:27.5px;color:#000;-webkit-text-stroke:.75px #000;transform:scaleX(.95);">7</span>
<span class="t" style="left:453.5px;top:514px;width:80px;text-align:center;line-height:40px;font-size:27.5px;color:#000;-webkit-text-stroke:.75px #000;transform:scaleX(.95);">8</span>
<span class="t" style="left:573.8px;top:514px;width:80px;text-align:center;line-height:40px;font-size:27.5px;color:#000;-webkit-text-stroke:.75px #000;transform:scaleX(.95);">9</span>
<span class="t" style="left:333.5px;top:585.5px;width:80px;text-align:center;line-height:40px;font-size:27.5px;color:#000;-webkit-text-stroke:.75px #000;transform:scaleX(.95);">4</span>
<span class="t" style="left:453.5px;top:585.5px;width:80px;text-align:center;line-height:40px;font-size:27.5px;color:#000;-webkit-text-stroke:.75px #000;transform:scaleX(.95);">5</span>
<span class="t" style="left:573.8px;top:585.5px;width:80px;text-align:center;line-height:40px;font-size:27.5px;color:#000;-webkit-text-stroke:.75px #000;transform:scaleX(.95);">6</span>
<span class="t" style="left:333.5px;top:657px;width:80px;text-align:center;line-height:40px;font-size:27.5px;color:#000;-webkit-text-stroke:.75px #000;transform:scaleX(.95);">1</span>
<span class="t" style="left:453.5px;top:657px;width:80px;text-align:center;line-height:40px;font-size:27.5px;color:#000;-webkit-text-stroke:.75px #000;transform:scaleX(.95);">2</span>
<span class="t" style="left:573.8px;top:657px;width:80px;text-align:center;line-height:40px;font-size:27.5px;color:#000;-webkit-text-stroke:.75px #000;transform:scaleX(.95);">3</span>
<span class="t" style="left:453.5px;top:728.5px;width:80px;text-align:center;line-height:40px;font-size:27.5px;color:#000;-webkit-text-stroke:.75px #000;transform:scaleX(.95);">0</span>
<span class="t" style="left:333.5px;top:726.5px;width:80px;text-align:center;line-height:40px;font-size:24px;color:#000;font-family:'DejaVu Sans Light','DejaVu Sans',sans-serif;font-weight:200;">±</span>
<span class="t" style="left:573.8px;top:724.5px;width:80px;text-align:center;line-height:40px;font-size:27px;color:#000;font-weight:bold;">.</span>
<div id="wm" style="left:0;top:0;width:1928px;height:1005px;overflow:hidden;pointer-events:none">
<span class="wm" style="left:17.5px;top:6.7px">'零组资料文库'</span>
<span class="wm" style="left:-36.0px;top:132.5px">'零组资料文库'</span>
<span class="wm" style="left:-89.5px;top:258.3px">'零组资料文库'</span>
<span class="wm" style="left:153.5px;top:23.8px">'零组资料文库'</span>
<span class="wm" style="left:100.0px;top:149.6px">'零组资料文库'</span>
<span class="wm" style="left:46.5px;top:275.4px">'零组资料文库'</span>
<span class="wm" style="left:-7.0px;top:401.2px">'零组资料文库'</span>
<span class="wm" style="left:-60.5px;top:527.0px">'零组资料文库'</span>
<span class="wm" style="left:289.5px;top:40.9px">'零组资料文库'</span>
<span class="wm" style="left:236.0px;top:166.7px">'零组资料文库'</span>
<span class="wm" style="left:182.5px;top:292.5px">'零组资料文库'</span>
<span class="wm" style="left:129.0px;top:418.3px">'零组资料文库'</span>
<span class="wm" style="left:75.5px;top:544.1px">'零组资料文库'</span>
<span class="wm" style="left:22.0px;top:669.9px">'零组资料文库'</span>
<span class="wm" style="left:-31.5px;top:795.7px">'零组资料文库'</span>
<span class="wm" style="left:-85.0px;top:921.5px">'零组资料文库'</span>
<span class="wm" style="left:425.5px;top:58.0px">'零组资料文库'</span>
<span class="wm" style="left:372.0px;top:183.8px">'零组资料文库'</span>
<span class="wm" style="left:318.5px;top:309.6px">'零组资料文库'</span>
<span class="wm" style="left:265.0px;top:435.4px">'零组资料文库'</span>
<span class="wm" style="left:211.5px;top:561.2px">'零组资料文库'</span>
<span class="wm" style="left:158.0px;top:687.0px">'零组资料文库'</span>
<span class="wm" style="left:104.5px;top:812.8px">'零组资料文库'</span>
<span class="wm" style="left:51.0px;top:938.6px">'零组资料文库'</span>
<span class="wm" style="left:-2.5px;top:1064.4px">'零组资料文库'</span>
<span class="wm" style="left:615.0px;top:-50.7px">'零组资料文库'</span>
<span class="wm" style="left:561.5px;top:75.1px">'零组资料文库'</span>
<span class="wm" style="left:508.0px;top:200.9px">'零组资料文库'</span>
<span class="wm" style="left:454.5px;top:326.7px">'零组资料文库'</span>
<span class="wm" style="left:401.0px;top:452.5px">'零组资料文库'</span>
<span class="wm" style="left:347.5px;top:578.3px">'零组资料文库'</span>
<span class="wm" style="left:294.0px;top:704.1px">'零组资料文库'</span>
<span class="wm" style="left:240.5px;top:829.9px">'零组资料文库'</span>
<span class="wm" style="left:187.0px;top:955.7px">'零组资料文库'</span>
<span class="wm" style="left:751.0px;top:-33.6px">'零组资料文库'</span>
<span class="wm" style="left:697.5px;top:92.2px">'零组资料文库'</span>
<span class="wm" style="left:644.0px;top:218.0px">'零组资料文库'</span>
<span class="wm" style="left:590.5px;top:343.8px">'零组资料文库'</span>
<span class="wm" style="left:537.0px;top:469.6px">'零组资料文库'</span>
<span class="wm" style="left:483.5px;top:595.4px">'零组资料文库'</span>
<span class="wm" style="left:430.0px;top:721.2px">'零组资料文库'</span>
<span class="wm" style="left:376.5px;top:847.0px">'零组资料文库'</span>
<span class="wm" style="left:323.0px;top:972.8px">'零组资料文库'</span>
<span class="wm" style="left:887.0px;top:-16.5px">'零组资料文库'</span>
<span class="wm" style="left:833.5px;top:109.3px">'零组资料文库'</span>
<span class="wm" style="left:780.0px;top:235.1px">'零组资料文库'</span>
<span class="wm" style="left:726.5px;top:360.9px">'零组资料文库'</span>
<span class="wm" style="left:673.0px;top:486.7px">'零组资料文库'</span>
<span class="wm" style="left:619.5px;top:612.5px">'零组资料文库'</span>
<span class="wm" style="left:566.0px;top:738.3px">'零组资料文库'</span>
<span class="wm" style="left:512.5px;top:864.1px">'零组资料文库'</span>
<span class="wm" style="left:459.0px;top:989.9px">'零组资料文库'</span>
<span class="wm" style="left:1023.0px;top:0.6px">'零组资料文库'</span>
<span class="wm" style="left:969.5px;top:126.4px">'零组资料文库'</span>
<span class="wm" style="left:916.0px;top:252.2px">'零组资料文库'</span>
<span class="wm" style="left:862.5px;top:378.0px">'零组资料文库'</span>
<span class="wm" style="left:809.0px;top:503.8px">'零组资料文库'</span>
<span class="wm" style="left:755.5px;top:629.6px">'零组资料文库'</span>
<span class="wm" style="left:702.0px;top:755.4px">'零组资料文库'</span>
<span class="wm" style="left:648.5px;top:881.2px">'零组资料文库'</span>
<span class="wm" style="left:595.0px;top:1007.0px">'零组资料文库'</span>
<span class="wm" style="left:1159.0px;top:17.7px">'零组资料文库'</span>
<span class="wm" style="left:1105.5px;top:143.5px">'零组资料文库'</span>
<span class="wm" style="left:1052.0px;top:269.3px">'零组资料文库'</span>
<span class="wm" style="left:998.5px;top:395.1px">'零组资料文库'</span>
<span class="wm" style="left:945.0px;top:520.9px">'零组资料文库'</span>
<span class="wm" style="left:891.5px;top:646.7px">'零组资料文库'</span>
<span class="wm" style="left:838.0px;top:772.5px">'零组资料文库'</span>
<span class="wm" style="left:784.5px;top:898.3px">'零组资料文库'</span>
<span class="wm" style="left:731.0px;top:1024.1px">'零组资料文库'</span>
<span class="wm" style="left:1295.0px;top:34.8px">'零组资料文库'</span>
<span class="wm" style="left:1241.5px;top:160.6px">'零组资料文库'</span>
<span class="wm" style="left:1188.0px;top:286.4px">'零组资料文库'</span>
<span class="wm" style="left:1134.5px;top:412.2px">'零组资料文库'</span>
<span class="wm" style="left:1081.0px;top:538.0px">'零组资料文库'</span>
<span class="wm" style="left:1027.5px;top:663.8px">'零组资料文库'</span>
<span class="wm" style="left:974.0px;top:789.6px">'零组资料文库'</span>
<span class="wm" style="left:920.5px;top:915.4px">'零组资料文库'</span>
<span class="wm" style="left:867.0px;top:1041.2px">'零组资料文库'</span>
<span class="wm" style="left:1431.0px;top:51.9px">'零组资料文库'</span>
<span class="wm" style="left:1377.5px;top:177.7px">'零组资料文库'</span>
<span class="wm" style="left:1324.0px;top:303.5px">'零组资料文库'</span>
<span class="wm" style="left:1270.5px;top:429.3px">'零组资料文库'</span>
<span class="wm" style="left:1217.0px;top:555.1px">'零组资料文库'</span>
<span class="wm" style="left:1163.5px;top:680.9px">'零组资料文库'</span>
<span class="wm" style="left:1110.0px;top:806.7px">'零组资料文库'</span>
<span class="wm" style="left:1056.5px;top:932.5px">'零组资料文库'</span>
<span class="wm" style="left:1003.0px;top:1058.3px">'零组资料文库'</span>
<span class="wm" style="left:1620.5px;top:-56.8px">'零组资料文库'</span>
<span class="wm" style="left:1567.0px;top:69.0px">'零组资料文库'</span>
<span class="wm" style="left:1513.5px;top:194.8px">'零组资料文库'</span>
<span class="wm" style="left:1460.0px;top:320.6px">'零组资料文库'</span>
<span class="wm" style="left:1406.5px;top:446.4px">'零组资料文库'</span>
<span class="wm" style="left:1353.0px;top:572.2px">'零组资料文库'</span>
<span class="wm" style="left:1299.5px;top:698.0px">'零组资料文库'</span>
<span class="wm" style="left:1246.0px;top:823.8px">'零组资料文库'</span>
<span class="wm" style="left:1192.5px;top:949.6px">'零组资料文库'</span>
<span class="wm" style="left:1756.5px;top:-39.7px">'零组资料文库'</span>
<span class="wm" style="left:1703.0px;top:86.1px">'零组资料文库'</span>
<span class="wm" style="left:1649.5px;top:211.9px">'零组资料文库'</span>
<span class="wm" style="left:1596.0px;top:337.7px">'零组资料文库'</span>
<span class="wm" style="left:1542.5px;top:463.5px">'零组资料文库'</span>
<span class="wm" style="left:1489.0px;top:589.3px">'零组资料文库'</span>
<span class="wm" style="left:1435.5px;top:715.1px">'零组资料文库'</span>
<span class="wm" style="left:1382.0px;top:840.9px">'零组资料文库'</span>
<span class="wm" style="left:1328.5px;top:966.7px">'零组资料文库'</span>
<span class="wm" style="left:1892.5px;top:-22.6px">'零组资料文库'</span>
<span class="wm" style="left:1839.0px;top:103.2px">'零组资料文库'</span>
<span class="wm" style="left:1785.5px;top:229.0px">'零组资料文库'</span>
<span class="wm" style="left:1732.0px;top:354.8px">'零组资料文库'</span>
<span class="wm" style="left:1678.5px;top:480.6px">'零组资料文库'</span>
<span class="wm" style="left:1625.0px;top:606.4px">'零组资料文库'</span>
<span class="wm" style="left:1571.5px;top:732.2px">'零组资料文库'</span>
<span class="wm" style="left:1518.0px;top:858.0px">'零组资料文库'</span>
<span class="wm" style="left:1464.5px;top:983.8px">'零组资料文库'</span>
<span class="wm" style="left:1975.0px;top:120.3px">'零组资料文库'</span>
<span class="wm" style="left:1921.5px;top:246.1px">'零组资料文库'</span>
<span class="wm" style="left:1868.0px;top:371.9px">'零组资料文库'</span>
<span class="wm" style="left:1814.5px;top:497.7px">'零组资料文库'</span>
<span class="wm" style="left:1761.0px;top:623.5px">'零组资料文库'</span>
<span class="wm" style="left:1707.5px;top:749.3px">'零组资料文库'</span>
<span class="wm" style="left:1654.0px;top:875.1px">'零组资料文库'</span>
<span class="wm" style="left:1600.5px;top:1000.9px">'零组资料文库'</span>
<span class="wm" style="left:2004.0px;top:389.0px">'零组资料文库'</span>
<span class="wm" style="left:1950.5px;top:514.8px">'零组资料文库'</span>
<span class="wm" style="left:1897.0px;top:640.6px">'零组资料文库'</span>
<span class="wm" style="left:1843.5px;top:766.4px">'零组资料文库'</span>
<span class="wm" style="left:1790.0px;top:892.2px">'零组资料文库'</span>
<span class="wm" style="left:1736.5px;top:1018.0px">'零组资料文库'</span>
<span class="wm" style="left:1979.5px;top:783.5px">'零组资料文库'</span>
<span class="wm" style="left:1926.0px;top:909.3px">'零组资料文库'</span>
<span class="wm" style="left:1872.5px;top:1035.1px">'零组资料文库'</span>
<span class="wm" style="left:2008.5px;top:1052.2px">'零组资料文库'</span>
</div>
<div id="wm2" style="left:311px;top:107px;width:486px;height:678px;overflow:hidden;pointer-events:none">
<span class="wm w2" style="left:-75.0px;top:59.7px">'零组资料文库'</span>
<span class="wm w2" style="left:114.5px;top:-49.0px">'零组资料文库'</span>
<span class="wm w2" style="left:61.0px;top:76.8px">'零组资料文库'</span>
<span class="wm w2" style="left:7.5px;top:202.6px">'零组资料文库'</span>
<span class="wm w2" style="left:-46.0px;top:328.4px">'零组资料文库'</span>
<span class="wm w2" style="left:250.5px;top:-31.9px">'零组资料文库'</span>
<span class="wm w2" style="left:197.0px;top:93.9px">'零组资料文库'</span>
<span class="wm w2" style="left:143.5px;top:219.7px">'零组资料文库'</span>
<span class="wm w2" style="left:90.0px;top:345.5px">'零组资料文库'</span>
<span class="wm w2" style="left:36.5px;top:471.3px">'零组资料文库'</span>
<span class="wm w2" style="left:-17.0px;top:597.1px">'零组资料文库'</span>
<span class="wm w2" style="left:-70.5px;top:722.9px">'零组资料文库'</span>
<span class="wm w2" style="left:386.5px;top:-14.8px">'零组资料文库'</span>
<span class="wm w2" style="left:333.0px;top:111.0px">'零组资料文库'</span>
<span class="wm w2" style="left:279.5px;top:236.8px">'零组资料文库'</span>
<span class="wm w2" style="left:226.0px;top:362.6px">'零组资料文库'</span>
<span class="wm w2" style="left:172.5px;top:488.4px">'零组资料文库'</span>
<span class="wm w2" style="left:119.0px;top:614.2px">'零组资料文库'</span>
<span class="wm w2" style="left:522.5px;top:2.3px">'零组资料文库'</span>
<span class="wm w2" style="left:469.0px;top:128.1px">'零组资料文库'</span>
<span class="wm w2" style="left:415.5px;top:253.9px">'零组资料文库'</span>
<span class="wm w2" style="left:362.0px;top:379.7px">'零组资料文库'</span>
<span class="wm w2" style="left:308.5px;top:505.5px">'零组资料文库'</span>
<span class="wm w2" style="left:255.0px;top:631.3px">'零组资料文库'</span>
<span class="wm w2" style="left:551.5px;top:271.0px">'零组资料文库'</span>
<span class="wm w2" style="left:498.0px;top:396.8px">'零组资料文库'</span>
<span class="wm w2" style="left:444.5px;top:522.6px">'零组资料文库'</span>
<span class="wm w2" style="left:391.0px;top:648.4px">'零组资料文库'</span>
<span class="wm w2" style="left:527.0px;top:665.5px">'零组资料文库'</span>
</div>
</div></body></html>
